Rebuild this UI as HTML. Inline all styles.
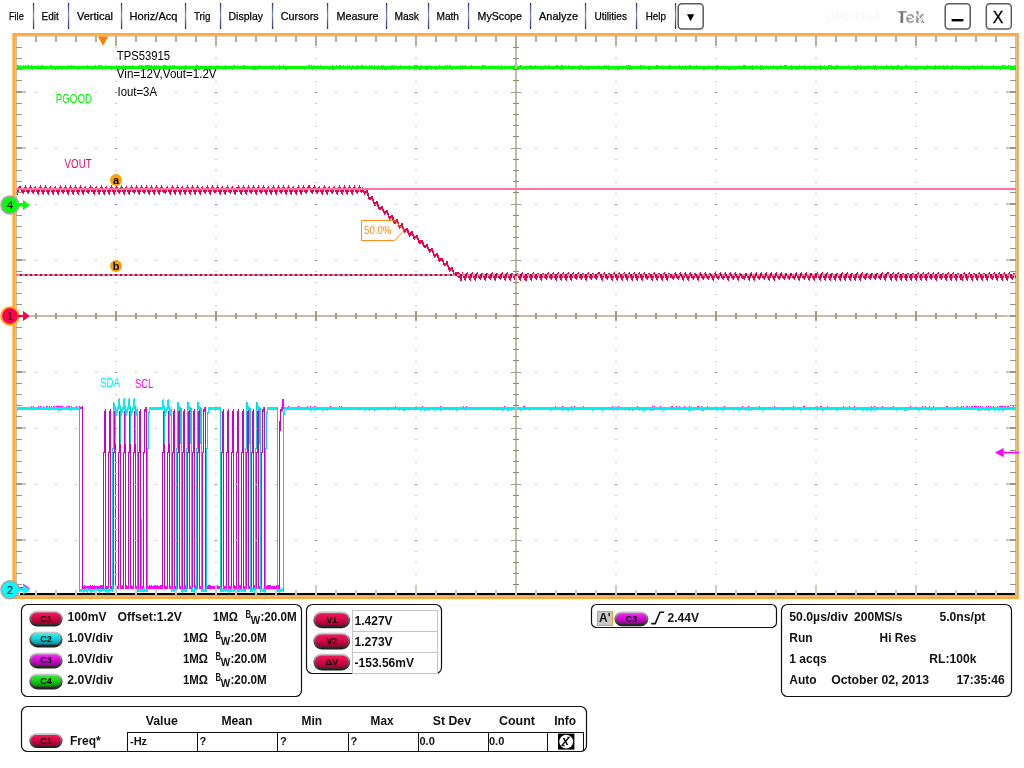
<!DOCTYPE html>
<html lang="en"><head><meta charset="utf-8"><title>Tek DPO7104 - TPS53915</title>
<style>
html,body{margin:0;padding:0;background:#fff;}
body{width:1024px;height:768px;overflow:hidden;position:relative;font-family:"Liberation Sans",Arial,sans-serif;}
svg{position:absolute;left:0;top:0;display:block;will-change:transform;}
text{font-family:"Liberation Sans",Arial,sans-serif;}
.ce{shape-rendering:crispEdges;}
</style></head><body>
<svg id="scope" width="1024" height="768" viewBox="0 0 1024 768">
<defs>
<linearGradient id="gC1" x1="0" y1="0" x2="0" y2="1"><stop offset="0" stop-color="#f0185a"/><stop offset="0.5" stop-color="#d80848"/><stop offset="1" stop-color="#98002c"/></linearGradient>
<linearGradient id="gC2" x1="0" y1="0" x2="0" y2="1"><stop offset="0" stop-color="#30f0f0"/><stop offset="0.5" stop-color="#10d0d8"/><stop offset="1" stop-color="#108890"/></linearGradient>
<linearGradient id="gC3" x1="0" y1="0" x2="0" y2="1"><stop offset="0" stop-color="#f030f0"/><stop offset="0.5" stop-color="#d808d8"/><stop offset="1" stop-color="#900890"/></linearGradient>
<linearGradient id="gC4" x1="0" y1="0" x2="0" y2="1"><stop offset="0" stop-color="#30f030"/><stop offset="0.5" stop-color="#10d010"/><stop offset="1" stop-color="#088808"/></linearGradient>
<linearGradient id="gRim" x1="0" y1="0" x2="0" y2="1"><stop offset="0" stop-color="#d8d8d8"/><stop offset="0.45" stop-color="#707070"/><stop offset="1" stop-color="#181818"/></linearGradient>
<linearGradient id="gSep" x1="0" y1="0" x2="0" y2="1"><stop offset="0" stop-color="#2a3680"/><stop offset="0.45" stop-color="#7f90c4"/><stop offset="1" stop-color="#222e78"/></linearGradient>
</defs>

<g id="menubar">
<text x="9" y="20" font-size="11" fill="#000" textLength="14.75" lengthAdjust="spacingAndGlyphs" stroke="#000" stroke-width="0.25">File</text>
<text x="41.5" y="20" font-size="11" fill="#000" textLength="17.25" lengthAdjust="spacingAndGlyphs" stroke="#000" stroke-width="0.25">Edit</text>
<text x="77" y="20" font-size="11" fill="#000" textLength="36" lengthAdjust="spacingAndGlyphs" stroke="#000" stroke-width="0.25">Vertical</text>
<text x="129.5" y="20" font-size="11" fill="#000" textLength="48.0" lengthAdjust="spacingAndGlyphs" stroke="#000" stroke-width="0.25">Horiz/Acq</text>
<text x="194" y="20" font-size="11" fill="#000" textLength="16.5" lengthAdjust="spacingAndGlyphs" stroke="#000" stroke-width="0.25">Trig</text>
<text x="228.5" y="20" font-size="11" fill="#000" textLength="34.5" lengthAdjust="spacingAndGlyphs" stroke="#000" stroke-width="0.25">Display</text>
<text x="280.75" y="20" font-size="11" fill="#000" textLength="38.0" lengthAdjust="spacingAndGlyphs" stroke="#000" stroke-width="0.25">Cursors</text>
<text x="336.5" y="20" font-size="11" fill="#000" textLength="42.0" lengthAdjust="spacingAndGlyphs" stroke="#000" stroke-width="0.25">Measure</text>
<text x="394.5" y="20" font-size="11" fill="#000" textLength="24.5" lengthAdjust="spacingAndGlyphs" stroke="#000" stroke-width="0.25">Mask</text>
<text x="436.5" y="20" font-size="11" fill="#000" textLength="22.5" lengthAdjust="spacingAndGlyphs" stroke="#000" stroke-width="0.25">Math</text>
<text x="477.5" y="20" font-size="11" fill="#000" textLength="44.5" lengthAdjust="spacingAndGlyphs" stroke="#000" stroke-width="0.25">MyScope</text>
<text x="539" y="20" font-size="11" fill="#000" textLength="39" lengthAdjust="spacingAndGlyphs" stroke="#000" stroke-width="0.25">Analyze</text>
<text x="594.5" y="20" font-size="11" fill="#000" textLength="32.5" lengthAdjust="spacingAndGlyphs" stroke="#000" stroke-width="0.25">Utilities</text>
<text x="645.75" y="20" font-size="11" fill="#000" textLength="20.25" lengthAdjust="spacingAndGlyphs" stroke="#000" stroke-width="0.25">Help</text>
<rect x="32.9" y="3" width="1.3" height="26" fill="url(#gSep)"/>
<rect x="67.9" y="3" width="1.3" height="26" fill="url(#gSep)"/>
<rect x="120.9" y="3" width="1.3" height="26" fill="url(#gSep)"/>
<rect x="184.9" y="3" width="1.3" height="26" fill="url(#gSep)"/>
<rect x="219.9" y="3" width="1.3" height="26" fill="url(#gSep)"/>
<rect x="271.9" y="3" width="1.3" height="26" fill="url(#gSep)"/>
<rect x="326.9" y="3" width="1.3" height="26" fill="url(#gSep)"/>
<rect x="385.9" y="3" width="1.3" height="26" fill="url(#gSep)"/>
<rect x="427.9" y="3" width="1.3" height="26" fill="url(#gSep)"/>
<rect x="467.9" y="3" width="1.3" height="26" fill="url(#gSep)"/>
<rect x="529.9" y="3" width="1.3" height="26" fill="url(#gSep)"/>
<rect x="584.9" y="3" width="1.3" height="26" fill="url(#gSep)"/>
<rect x="635.9" y="3" width="1.3" height="26" fill="url(#gSep)"/>
<rect x="674.9" y="3" width="1.3" height="26" fill="url(#gSep)"/>
<rect x="678.2" y="3.7" width="25" height="25.4" rx="3.5" fill="#fff" stroke="#5a5a5a" stroke-width="1.5"/>
<path d="M687 14.2h7.2l-3.6 7z" fill="#000"/>
<text x="826" y="21" font-size="13" fill="#f6f6f6" textLength="54" lengthAdjust="spacingAndGlyphs">DPO7104</text>
<text x="896.5" y="22.5" font-size="16" fill="#989898" font-weight="bold" textLength="28" lengthAdjust="spacingAndGlyphs">Tek</text>
<path d="M897 11.6L905 20M905 15.2L916 19.6M914 12L922 21" stroke="#fff" stroke-width="1.3" fill="none" opacity="0.9"/>
<rect x="900.8" y="11.4" width="2.4" height="11.2" fill="#777"/>
<rect x="945.2" y="3.7" width="25" height="25.4" rx="3.5" fill="#fff" stroke="#5a5a5a" stroke-width="1.5"/>
<rect x="951.6" y="19" width="11.8" height="2.4" fill="#000"/>
<rect x="986.3" y="3.7" width="25" height="25.4" rx="3.5" fill="#fff" stroke="#5a5a5a" stroke-width="1.5"/>
<text x="998" y="23.2" font-size="15.6" fill="#000" textLength="10.6" lengthAdjust="spacingAndGlyphs" text-anchor="middle" stroke="#000" stroke-width="0.3">X</text>
</g>
<g id="graticule">
<rect x="12" y="33" width="1007" height="566" fill="#fff"/>
<path d="M12.1 33H1018.9V598.9H12.1ZM15.6 35.7V596.3H1016.6V35.7Z" fill="#ffaa33" fill-rule="evenodd"/>
<path d="M15.6 35.7H1016.6V596.3H15.6ZM16.8 36.6V595H1015.2V36.6Z" fill="#bfb094" fill-rule="evenodd"/>
<rect x="12.1" y="33" width="1" height="566" fill="#ffd08a" opacity="0.7"/>
</g>
<g id="ch4"><path class="ce" d="M17.5 65v5M18.5 65v4M19.5 66v3M20.5 65v4M21.5 66v3M22.5 66v3M23.5 65v4M24.5 66v3M25.5 65v4M26.5 66v3M27.5 65v4M28.5 65v4M29.5 66v3M30.5 66v3M31.5 65v4M32.5 66v4M33.5 66v3M34.5 66v3M35.5 66v3M36.5 66v3M37.5 66v3M38.5 65v4M39.5 66v3M40.5 66v4M41.5 65v4M42.5 65v4M43.5 66v4M44.5 66v3M45.5 66v4M46.5 66v3M47.5 66v3M48.5 66v3M49.5 66v3M50.5 65v4M51.5 65v4M52.5 66v4M53.5 66v3M54.5 66v3M55.5 66v4M56.5 66v3M57.5 66v3M58.5 66v4M59.5 66v3M60.5 66v3M61.5 66v4M62.5 66v3M63.5 66v3M64.5 66v3M65.5 66v3M66.5 66v4M67.5 66v3M68.5 65v4M69.5 66v3M70.5 66v3M71.5 65v4M72.5 66v3M73.5 65v4M74.5 66v3M75.5 66v3M76.5 66v3M77.5 66v3M78.5 66v4M79.5 66v3M80.5 66v3M81.5 66v3M82.5 66v3M83.5 66v3M84.5 66v3M85.5 66v3M86.5 66v3M87.5 65v4M88.5 66v3M89.5 66v3M90.5 66v3M91.5 66v3M92.5 66v4M93.5 66v3M94.5 66v3M95.5 65v4M96.5 66v3M97.5 66v4M98.5 65v4M99.5 65v4M100.5 66v3M101.5 65v4M102.5 66v4M103.5 66v3M104.5 66v3M105.5 65v4M106.5 66v3M107.5 66v3M108.5 66v3M109.5 66v3M110.5 66v3M111.5 66v4M112.5 66v3M113.5 66v3M114.5 66v3M115.5 66v3M116.5 65v4M117.5 66v4M118.5 66v4M119.5 66v4M120.5 66v3M121.5 66v3M122.5 66v4M123.5 65v4M124.5 66v3M125.5 66v3M126.5 66v3M127.5 66v3M128.5 66v3M129.5 66v3M130.5 66v3M131.5 66v3M132.5 65v4M133.5 66v3M134.5 66v3M135.5 66v3M136.5 66v3M137.5 66v3M138.5 66v3M139.5 65v4M140.5 66v3M141.5 65v4M142.5 65v4M143.5 66v4M144.5 66v4M145.5 65v5M146.5 65v4M147.5 65v4M148.5 65v4M149.5 65v4M150.5 66v3M151.5 65v4M152.5 66v3M153.5 66v3M154.5 65v4M155.5 66v4M156.5 65v5M157.5 66v3M158.5 65v4M159.5 66v3M160.5 66v3M161.5 66v3M162.5 66v3M163.5 65v4M164.5 65v4M165.5 65v5M166.5 66v4M167.5 66v3M168.5 66v4M169.5 65v4M170.5 66v3M171.5 66v3M172.5 65v4M173.5 66v3M174.5 65v4M175.5 66v3M176.5 66v3M177.5 66v3M178.5 66v3M179.5 66v4M180.5 66v3M181.5 66v4M182.5 66v3M183.5 66v3M184.5 66v3M185.5 65v5M186.5 66v4M187.5 66v3M188.5 66v3M189.5 66v3M190.5 66v3M191.5 66v3M192.5 66v3M193.5 66v4M194.5 66v3M195.5 66v3M196.5 65v4M197.5 65v4M198.5 66v4M199.5 66v4M200.5 66v3M201.5 66v3M202.5 66v3M203.5 66v3M204.5 66v3M205.5 66v3M206.5 66v3M207.5 66v4M208.5 66v4M209.5 66v4M210.5 66v4M211.5 66v3M212.5 66v3M213.5 66v3M214.5 66v3M215.5 66v3M216.5 66v3M217.5 65v4M218.5 66v3M219.5 66v3M220.5 66v3M221.5 66v3M222.5 66v3M223.5 66v4M224.5 66v3M225.5 65v5M226.5 66v3M227.5 66v3M228.5 66v3M229.5 66v3M230.5 66v3M231.5 66v3M232.5 66v4M233.5 65v4M234.5 65v4M235.5 66v3M236.5 66v3M237.5 65v4M238.5 66v3M239.5 66v3M240.5 66v3M241.5 66v3M242.5 66v3M243.5 65v4M244.5 65v4M245.5 66v3M246.5 66v3M247.5 66v3M248.5 66v3M249.5 66v3M250.5 66v3M251.5 66v3M252.5 66v4M253.5 66v4M254.5 66v4M255.5 66v4M256.5 66v3M257.5 66v4M258.5 66v3M259.5 65v4M260.5 66v3M261.5 66v3M262.5 66v3M263.5 66v3M264.5 66v3M265.5 66v3M266.5 66v3M267.5 66v3M268.5 66v3M269.5 66v3M270.5 65v4M271.5 66v3M272.5 66v4M273.5 65v4M274.5 66v3M275.5 66v4M276.5 66v3M277.5 66v3M278.5 66v3M279.5 65v5M280.5 66v3M281.5 66v3M282.5 66v3M283.5 65v4M284.5 66v3M285.5 66v4M286.5 66v4M287.5 66v3M288.5 66v3M289.5 66v3M290.5 66v3M291.5 66v3M292.5 66v3M293.5 66v3M294.5 66v3M295.5 66v3M296.5 66v3M297.5 66v3M298.5 66v3M299.5 66v3M300.5 66v3M301.5 66v3M302.5 66v3M303.5 66v3M304.5 66v4M305.5 66v3M306.5 66v3M307.5 66v3M308.5 65v4M309.5 65v4M310.5 66v3M311.5 65v4M312.5 66v4M313.5 65v4M314.5 66v3M315.5 66v3M316.5 66v3M317.5 65v4M318.5 66v3M319.5 66v3M320.5 65v4M321.5 66v3M322.5 66v3M323.5 66v4M324.5 66v3M325.5 66v3M326.5 66v3M327.5 66v3M328.5 66v3M329.5 66v4M330.5 66v3M331.5 66v3M332.5 65v5M333.5 66v4M334.5 66v4M335.5 66v3M336.5 65v4M337.5 66v3M338.5 66v3M339.5 65v4M340.5 65v5M341.5 66v3M342.5 66v3M343.5 65v4M344.5 66v3M345.5 66v3M346.5 66v3M347.5 65v4M348.5 66v4M349.5 65v4M350.5 66v3M351.5 66v4M352.5 65v4M353.5 66v3M354.5 66v3M355.5 66v3M356.5 66v4M357.5 65v4M358.5 66v3M359.5 66v3M360.5 66v3M361.5 65v4M362.5 65v4M363.5 66v3M364.5 66v3M365.5 65v4M366.5 66v3M367.5 66v3M368.5 66v3M369.5 65v4M370.5 66v3M371.5 65v4M372.5 66v3M373.5 66v3M374.5 65v5M375.5 66v3M376.5 66v3M377.5 66v4M378.5 65v4M379.5 66v3M380.5 66v4M381.5 65v4M382.5 66v4M383.5 65v4M384.5 66v4M385.5 66v4M386.5 66v4M387.5 66v3M388.5 66v4M389.5 66v3M390.5 66v4M391.5 65v5M392.5 65v4M393.5 66v4M394.5 65v4M395.5 66v3M396.5 66v3M397.5 66v4M398.5 66v3M399.5 66v3M400.5 65v4M401.5 66v3M402.5 66v3M403.5 66v3M404.5 66v3M405.5 66v3M406.5 66v3M407.5 66v3M408.5 66v3M409.5 65v5M410.5 66v3M411.5 66v3M412.5 66v3M413.5 66v3M414.5 65v5M415.5 65v4M416.5 65v4M417.5 65v4M418.5 66v3M419.5 66v4M420.5 66v4M421.5 65v4M422.5 66v3M423.5 66v3M424.5 66v3M425.5 66v4M426.5 66v4M427.5 66v4M428.5 66v3M429.5 65v4M430.5 66v3M431.5 66v4M432.5 66v3M433.5 66v3M434.5 66v3M435.5 66v4M436.5 66v3M437.5 66v4M438.5 66v3M439.5 65v4M440.5 66v3M441.5 66v3M442.5 66v3M443.5 66v4M444.5 66v3M445.5 65v4M446.5 66v4M447.5 65v4M448.5 66v3M449.5 65v4M450.5 65v4M451.5 66v4M452.5 66v4M453.5 66v3M454.5 66v3M455.5 66v3M456.5 66v3M457.5 66v3M458.5 66v3M459.5 66v3M460.5 65v5M461.5 66v3M462.5 65v4M463.5 66v3M464.5 66v3M465.5 65v4M466.5 66v3M467.5 66v3M468.5 66v3M469.5 66v3M470.5 66v3M471.5 65v4M472.5 66v3M473.5 66v3M474.5 66v3M475.5 66v3M476.5 66v3M477.5 66v3M478.5 66v3M479.5 66v3M480.5 66v3M481.5 66v4M482.5 65v4M483.5 65v4M484.5 66v3M485.5 65v4M486.5 66v3M487.5 66v3M488.5 66v3M489.5 66v3M490.5 66v3M491.5 66v3M492.5 65v4M493.5 66v3M494.5 66v3M495.5 66v3M496.5 66v3M497.5 66v3M498.5 65v4M499.5 66v3M500.5 66v4M501.5 65v4M502.5 66v4M503.5 66v3M504.5 66v4M505.5 66v3M506.5 66v3M507.5 66v3M508.5 66v3M509.5 66v3M510.5 66v3M511.5 66v3M512.5 66v3M513.5 66v3M514.5 65v4M515.5 65v4M516.5 66v4M517.5 66v3M518.5 66v4M519.5 66v3M520.5 65v4M521.5 65v4M522.5 66v4M523.5 66v3M524.5 66v3M525.5 66v3M526.5 66v4M527.5 66v3M528.5 66v3M529.5 66v3M530.5 65v4M531.5 66v3M532.5 66v4M533.5 66v3M534.5 66v3M535.5 65v4M536.5 66v3M537.5 66v3M538.5 66v3M539.5 66v3M540.5 66v4M541.5 66v4M542.5 66v3M543.5 66v4M544.5 66v3M545.5 65v4M546.5 66v3M547.5 66v3M548.5 65v4M549.5 66v3M550.5 66v3M551.5 66v3M552.5 66v3M553.5 66v4M554.5 66v3M555.5 66v3M556.5 65v4M557.5 65v4M558.5 66v3M559.5 66v3M560.5 66v4M561.5 65v4M562.5 65v5M563.5 66v4M564.5 66v3M565.5 65v4M566.5 66v3M567.5 66v3M568.5 65v4M569.5 66v3M570.5 66v3M571.5 66v3M572.5 66v4M573.5 66v3M574.5 66v3M575.5 66v3M576.5 66v3M577.5 66v3M578.5 66v3M579.5 66v4M580.5 65v4M581.5 65v4M582.5 66v3M583.5 66v4M584.5 66v3M585.5 66v4M586.5 66v4M587.5 66v3M588.5 66v4M589.5 66v3M590.5 66v3M591.5 66v3M592.5 66v3M593.5 66v3M594.5 66v3M595.5 66v3M596.5 66v3M597.5 66v3M598.5 65v4M599.5 66v3M600.5 66v3M601.5 66v3M602.5 66v3M603.5 66v4M604.5 65v4M605.5 66v3M606.5 65v4M607.5 66v3M608.5 65v5M609.5 66v4M610.5 66v3M611.5 66v3M612.5 66v4M613.5 66v3M614.5 66v4M615.5 66v3M616.5 66v3M617.5 66v4M618.5 66v4M619.5 66v4M620.5 66v3M621.5 66v3M622.5 66v4M623.5 66v3M624.5 66v3M625.5 66v3M626.5 65v4M627.5 66v4M628.5 65v4M629.5 65v5M630.5 65v4M631.5 66v4M632.5 66v4M633.5 66v3M634.5 66v3M635.5 66v3M636.5 66v3M637.5 66v3M638.5 66v3M639.5 66v3M640.5 65v5M641.5 65v4M642.5 66v4M643.5 66v3M644.5 65v4M645.5 66v3M646.5 66v3M647.5 66v3M648.5 66v4M649.5 66v4M650.5 66v4M651.5 66v3M652.5 66v3M653.5 66v3M654.5 66v3M655.5 66v3M656.5 65v4M657.5 65v4M658.5 66v3M659.5 66v3M660.5 66v3M661.5 66v3M662.5 65v4M663.5 66v3M664.5 66v3M665.5 66v3M666.5 66v3M667.5 66v3M668.5 66v4M669.5 65v4M670.5 65v4M671.5 66v3M672.5 66v3M673.5 66v3M674.5 66v3M675.5 66v3M676.5 66v3M677.5 66v3M678.5 66v3M679.5 65v4M680.5 66v3M681.5 66v4M682.5 66v3M683.5 66v3M684.5 66v4M685.5 65v4M686.5 66v4M687.5 66v3M688.5 66v3M689.5 65v4M690.5 65v4M691.5 66v3M692.5 66v3M693.5 66v3M694.5 66v4M695.5 66v3M696.5 65v4M697.5 66v4M698.5 66v3M699.5 66v3M700.5 66v3M701.5 66v3M702.5 66v3M703.5 66v4M704.5 66v4M705.5 66v3M706.5 66v3M707.5 66v4M708.5 65v4M709.5 66v3M710.5 66v3M711.5 66v3M712.5 66v4M713.5 66v3M714.5 66v3M715.5 66v4M716.5 65v4M717.5 65v5M718.5 66v3M719.5 66v3M720.5 66v4M721.5 66v3M722.5 66v3M723.5 66v3M724.5 66v4M725.5 66v3M726.5 66v4M727.5 66v3M728.5 66v4M729.5 66v4M730.5 66v3M731.5 66v4M732.5 66v3M733.5 66v3M734.5 66v4M735.5 66v4M736.5 66v3M737.5 66v3M738.5 66v3M739.5 65v4M740.5 66v3M741.5 66v4M742.5 66v3M743.5 65v4M744.5 65v4M745.5 65v4M746.5 66v3M747.5 66v3M748.5 66v3M749.5 66v3M750.5 66v3M751.5 66v3M752.5 65v5M753.5 66v4M754.5 66v3M755.5 66v3M756.5 65v4M757.5 66v3M758.5 66v3M759.5 66v3M760.5 65v5M761.5 66v4M762.5 65v4M763.5 66v4M764.5 66v3M765.5 66v3M766.5 65v4M767.5 66v3M768.5 66v4M769.5 66v3M770.5 66v3M771.5 66v3M772.5 66v3M773.5 65v4M774.5 66v3M775.5 66v3M776.5 66v3M777.5 66v4M778.5 66v3M779.5 66v3M780.5 65v4M781.5 66v3M782.5 66v3M783.5 66v3M784.5 65v4M785.5 65v4M786.5 65v4M787.5 66v3M788.5 66v4M789.5 66v3M790.5 66v3M791.5 65v5M792.5 66v4M793.5 66v3M794.5 66v3M795.5 66v4M796.5 66v3M797.5 66v4M798.5 66v4M799.5 65v4M800.5 66v3M801.5 66v3M802.5 66v3M803.5 66v3M804.5 65v4M805.5 66v4M806.5 66v3M807.5 66v3M808.5 66v3M809.5 66v3M810.5 66v4M811.5 66v3M812.5 66v3M813.5 66v3M814.5 66v4M815.5 66v3M816.5 66v3M817.5 66v3M818.5 66v3M819.5 66v3M820.5 65v5M821.5 66v4M822.5 66v3M823.5 66v3M824.5 65v4M825.5 66v4M826.5 66v3M827.5 66v4M828.5 65v4M829.5 65v4M830.5 66v3M831.5 65v5M832.5 66v3M833.5 66v3M834.5 66v3M835.5 66v4M836.5 65v4M837.5 65v4M838.5 66v3M839.5 66v3M840.5 66v3M841.5 66v4M842.5 66v3M843.5 66v3M844.5 66v3M845.5 66v3M846.5 66v3M847.5 66v3M848.5 65v4M849.5 66v3M850.5 66v4M851.5 66v3M852.5 66v3M853.5 66v3M854.5 66v4M855.5 66v4M856.5 66v4M857.5 65v4M858.5 66v3M859.5 66v3M860.5 65v5M861.5 66v3M862.5 66v3M863.5 66v3M864.5 66v4M865.5 66v3M866.5 66v3M867.5 66v3M868.5 65v4M869.5 66v3M870.5 66v3M871.5 66v3M872.5 66v3M873.5 65v4M874.5 66v4M875.5 65v4M876.5 66v4M877.5 66v3M878.5 66v3M879.5 66v3M880.5 66v3M881.5 66v3M882.5 66v3M883.5 66v4M884.5 66v3M885.5 66v3M886.5 65v4M887.5 66v3M888.5 66v3M889.5 66v4M890.5 66v3M891.5 65v4M892.5 66v4M893.5 66v4M894.5 66v3M895.5 66v3M896.5 66v4M897.5 65v4M898.5 65v5M899.5 66v3M900.5 66v4M901.5 66v4M902.5 66v4M903.5 66v3M904.5 66v3M905.5 65v4M906.5 65v4M907.5 66v3M908.5 66v3M909.5 66v3M910.5 65v4M911.5 66v4M912.5 66v3M913.5 66v3M914.5 66v4M915.5 66v4M916.5 66v3M917.5 66v4M918.5 66v3M919.5 66v3M920.5 66v3M921.5 66v3M922.5 66v3M923.5 66v3M924.5 66v4M925.5 66v3M926.5 66v4M927.5 65v4M928.5 66v3M929.5 66v3M930.5 66v3M931.5 66v3M932.5 66v3M933.5 66v3M934.5 66v4M935.5 65v4M936.5 66v3M937.5 66v3M938.5 66v3M939.5 65v4M940.5 66v3M941.5 66v3M942.5 66v3M943.5 65v4M944.5 66v4M945.5 66v3M946.5 66v3M947.5 65v4M948.5 66v3M949.5 66v3M950.5 66v3M951.5 66v4M952.5 65v4M953.5 66v3M954.5 66v3M955.5 66v3M956.5 65v4M957.5 66v3M958.5 66v3M959.5 66v3M960.5 66v3M961.5 66v3M962.5 66v4M963.5 66v3M964.5 66v4M965.5 66v3M966.5 66v3M967.5 66v3M968.5 66v4M969.5 66v4M970.5 66v3M971.5 66v3M972.5 66v3M973.5 65v4M974.5 66v4M975.5 66v3M976.5 66v3M977.5 65v4M978.5 66v3M979.5 66v3M980.5 65v4M981.5 66v3M982.5 65v4M983.5 66v3M984.5 66v3M985.5 66v3M986.5 66v4M987.5 66v3M988.5 66v3M989.5 66v3M990.5 66v3M991.5 66v3M992.5 66v3M993.5 65v4M994.5 66v3M995.5 66v3M996.5 66v4M997.5 66v3M998.5 66v3M999.5 66v3M1000.5 66v4M1001.5 66v3M1002.5 65v4M1003.5 65v4M1004.5 66v3M1005.5 65v4M1006.5 66v3M1007.5 66v3M1008.5 65v4M1009.5 66v3M1010.5 65v4M1011.5 66v3M1012.5 66v3M1013.5 66v3M1014.5 65v4M1015.5 66v3" stroke="#00ff00" stroke-width="1" fill="none"/></g>
<g id="ch3"><path class="ce" d="M82.5 406v183M103.5 452v134M105.5 453v133M104.5 411v42M105.5 409v44M108.5 452v134M110.5 453v133M109.5 411v42M110.5 409v44M113.5 452v134M115.5 453v133M114.5 411v42M115.5 409v44M118.5 452v134M120.5 453v133M119.5 411v42M120.5 409v44M123.5 452v134M125.5 453v133M124.5 411v42M125.5 409v44M128.5 452v134M130.5 453v133M129.5 411v42M130.5 409v44M133.5 452v134M135.5 453v133M134.5 411v42M135.5 409v44M138.5 452v134M140.5 453v133M139.5 411v42M140.5 409v44M143.5 452v134M146.5 452v134M144.5 409v44M146.5 407v46M162.5 452v134M164.5 453v133M163.5 411v42M164.5 409v44M167.5 452v134M169.5 453v133M168.5 411v42M169.5 409v44M172.5 452v134M174.5 453v133M173.5 411v42M174.5 409v44M177.5 452v134M179.5 453v133M178.5 411v42M179.5 409v44M182.5 452v134M184.5 453v133M183.5 411v42M184.5 409v44M187.5 452v134M189.5 453v133M188.5 411v42M189.5 409v44M192.5 452v134M194.5 453v133M193.5 411v42M194.5 409v44M197.5 452v134M199.5 453v133M198.5 411v42M199.5 409v44M202.5 452v134M205.5 452v134M203.5 409v44M205.5 407v46M221.5 452v134M223.5 453v133M222.5 411v42M223.5 409v44M226.5 452v134M228.5 453v133M227.5 411v42M228.5 409v44M231.5 452v134M233.5 453v133M232.5 411v42M233.5 409v44M236.5 452v134M238.5 453v133M237.5 411v42M238.5 409v44M241.5 452v134M243.5 453v133M242.5 411v42M243.5 409v44M246.5 452v134M248.5 453v133M247.5 411v42M248.5 409v44M251.5 452v134M253.5 453v133M252.5 411v42M253.5 409v44M256.5 452v134M258.5 453v133M257.5 411v42M258.5 409v44M261.5 452v134M264.5 452v134M262.5 409v44M264.5 407v46M279.5 421v168M280.5 409v22" stroke="#cc00cc" stroke-width="1" fill="none"/><path class="ce" d="M17.5 407v2M18.5 407v2M19.5 407v2M20.5 407v2M21.5 407v2M22.5 407v2M23.5 407v2M24.5 407v2M25.5 407v2M26.5 407v2M27.5 407v2M28.5 407v2M29.5 407v2M30.5 407v2M31.5 406v3M32.5 407v2M33.5 406v3M34.5 407v2M35.5 407v2M36.5 407v2M37.5 407v2M38.5 406v3M39.5 407v2M40.5 406v3M41.5 407v2M42.5 407v2M43.5 406v3M44.5 407v2M45.5 407v2M46.5 406v3M47.5 406v3M48.5 407v2M49.5 406v3M50.5 407v2M51.5 406v3M52.5 407v2M53.5 406v3M54.5 406v3M55.5 407v2M56.5 406v3M57.5 406v3M58.5 406v3M59.5 406v3M60.5 406v3M61.5 406v3M62.5 406v3M63.5 407v2M64.5 407v2M65.5 407v2M66.5 406v3M67.5 407v2M68.5 406v3M69.5 406v3M70.5 407v2M71.5 406v3M72.5 407v2M73.5 407v2M74.5 407v2M75.5 407v2M76.5 406v3M77.5 407v2M78.5 407v2M79.5 406v3M80.5 407v2M81.5 407v2M83.5 586v3M84.5 585v4M85.5 586v3M86.5 586v3M87.5 586v3M88.5 586v3M89.5 586v3M90.5 585v4M91.5 586v3M92.5 585v4M93.5 586v3M94.5 585v4M95.5 586v3M96.5 586v3M97.5 586v3M98.5 586v3M99.5 586v3M100.5 585v4M101.5 585v4M102.5 585v4M103.5 586v3M105.5 586v3M106.5 586v3M107.5 586v3M108.5 585v4M110.5 585v4M111.5 586v3M112.5 585v4M113.5 585v4M115.5 586v3M116.5 585v4M117.5 586v3M118.5 585v4M120.5 586v3M121.5 586v3M122.5 585v4M123.5 586v3M125.5 586v3M126.5 585v4M127.5 586v3M128.5 585v4M130.5 585v4M131.5 585v4M132.5 586v3M133.5 586v3M135.5 586v3M136.5 586v3M137.5 585v4M138.5 585v4M140.5 586v3M141.5 586v3M142.5 586v3M143.5 586v3M146.5 586v3M147.5 586v3M148.5 586v3M149.5 585v4M150.5 586v3M151.5 585v4M152.5 586v3M153.5 586v3M154.5 585v4M155.5 585v4M156.5 586v3M157.5 585v4M158.5 586v3M159.5 586v3M160.5 585v4M161.5 585v4M162.5 586v3M164.5 586v3M165.5 586v3M166.5 586v3M167.5 585v4M169.5 586v3M170.5 586v3M171.5 585v4M172.5 586v3M174.5 586v3M175.5 586v3M176.5 585v4M177.5 586v3M179.5 586v3M180.5 586v3M181.5 586v3M182.5 586v3M184.5 585v4M185.5 585v4M186.5 585v4M187.5 585v4M189.5 586v3M190.5 586v3M191.5 586v3M192.5 586v3M194.5 586v3M195.5 585v4M196.5 586v3M197.5 586v3M199.5 586v3M200.5 586v3M201.5 585v4M202.5 586v3M205.5 586v3M206.5 585v4M207.5 586v3M208.5 585v4M209.5 585v4M210.5 585v4M211.5 586v3M212.5 586v3M213.5 586v3M214.5 586v3M215.5 586v3M216.5 586v3M217.5 585v4M218.5 586v3M219.5 586v3M220.5 586v3M221.5 586v3M223.5 586v3M224.5 586v3M225.5 586v3M226.5 586v3M228.5 586v3M229.5 586v3M230.5 586v3M231.5 586v3M233.5 586v3M234.5 585v4M235.5 586v3M236.5 585v4M238.5 586v3M239.5 585v4M240.5 585v4M241.5 585v4M243.5 586v3M244.5 586v3M245.5 585v4M246.5 585v4M248.5 585v4M249.5 586v3M250.5 586v3M251.5 586v3M253.5 586v3M254.5 585v4M255.5 586v3M256.5 586v3M258.5 586v3M259.5 586v3M260.5 586v3M261.5 585v4M264.5 586v3M265.5 586v3M266.5 586v3M267.5 585v4M268.5 585v4M269.5 585v4M270.5 585v4M271.5 586v3M272.5 586v3M273.5 586v3M274.5 586v3M275.5 586v3M276.5 585v4M277.5 585v4M278.5 585v4M145.5 407v5M204.5 407v5M263.5 407v5M281.5 407v5M282.5 399v12M283.5 399v10M284.5 407v2M285.5 407v2M286.5 407v2M287.5 407v2M288.5 406v3M289.5 407v2M290.5 407v2M291.5 407v2M292.5 407v2M293.5 407v2M294.5 407v2M295.5 407v2M296.5 407v2M297.5 407v2M298.5 406v3M299.5 407v2M300.5 407v2M301.5 407v2M302.5 407v2M303.5 407v2M304.5 407v2M305.5 407v2M306.5 407v2M307.5 406v3M308.5 407v2M309.5 407v2M310.5 406v3M311.5 407v2M312.5 407v2M313.5 407v2M314.5 406v3M315.5 407v2M316.5 407v2M317.5 407v2M318.5 407v2M319.5 407v2M320.5 407v2M321.5 407v2M322.5 407v2M323.5 407v2M324.5 407v2M325.5 407v2M326.5 407v2M327.5 407v2M328.5 407v2M329.5 407v2M330.5 406v3M331.5 407v2M332.5 407v2M333.5 407v2M334.5 407v2M335.5 407v2M336.5 407v2M337.5 407v2M338.5 407v2M339.5 406v3M340.5 407v2M341.5 406v3M342.5 407v2M343.5 407v2M344.5 407v2M345.5 407v2M346.5 407v2M347.5 407v2M348.5 407v2M349.5 407v2M350.5 407v2M351.5 407v2M352.5 407v2M353.5 407v2M354.5 407v2M355.5 407v2M356.5 407v2M357.5 407v2M358.5 407v2M359.5 407v2M360.5 407v2M361.5 407v2M362.5 407v2M363.5 407v2M364.5 407v2M365.5 407v2M366.5 407v2M367.5 407v2M368.5 407v2M369.5 407v2M370.5 407v2M371.5 407v2M372.5 407v2M373.5 407v2M374.5 407v2M375.5 407v2M376.5 407v2M377.5 407v2M378.5 407v2M379.5 407v2M380.5 407v2M381.5 407v2M382.5 407v2M383.5 407v2M384.5 407v2M385.5 407v2M386.5 407v2M387.5 407v2M388.5 407v2M389.5 407v2M390.5 407v2M391.5 407v2M392.5 407v2M393.5 407v2M394.5 407v2M395.5 406v3M396.5 407v2M397.5 407v2M398.5 407v2M399.5 407v2M400.5 407v2M401.5 407v2M402.5 407v2M403.5 407v2M404.5 407v2M405.5 407v2M406.5 407v2M407.5 407v2M408.5 407v2M409.5 407v2M410.5 407v2M411.5 407v2M412.5 407v2M413.5 407v2M414.5 407v2M415.5 407v2M416.5 407v2M417.5 407v2M418.5 407v2M419.5 407v2M420.5 407v2M421.5 407v2M422.5 406v3M423.5 407v2M424.5 407v2M425.5 407v2M426.5 407v2M427.5 407v2M428.5 407v2M429.5 407v2M430.5 407v2M431.5 407v2M432.5 407v2M433.5 407v2M434.5 407v2M435.5 407v2M436.5 407v2M437.5 407v2M438.5 407v2M439.5 407v2M440.5 406v3M441.5 407v2M442.5 407v2M443.5 407v2M444.5 407v2M445.5 407v2M446.5 407v2M447.5 407v2M448.5 407v2M449.5 407v2M450.5 407v2M451.5 407v2M452.5 407v2M453.5 407v2M454.5 407v2M455.5 407v2M456.5 407v2M457.5 407v2M458.5 407v2M459.5 407v2M460.5 407v2M461.5 407v2M462.5 407v2M463.5 406v3M464.5 407v2M465.5 407v2M466.5 406v3M467.5 407v2M468.5 407v2M469.5 407v2M470.5 407v2M471.5 407v2M472.5 407v2M473.5 407v2M474.5 407v2M475.5 407v2M476.5 407v2M477.5 407v2M478.5 407v2M479.5 407v2M480.5 407v2M481.5 407v2M482.5 407v2M483.5 407v2M484.5 407v2M485.5 407v2M486.5 407v2M487.5 407v2M488.5 407v2M489.5 407v2M490.5 407v2M491.5 407v2M492.5 407v2M493.5 407v2M494.5 407v2M495.5 407v2M496.5 407v2M497.5 407v2M498.5 407v2M499.5 407v2M500.5 407v2M501.5 407v2M502.5 407v2M503.5 407v2M504.5 406v3M505.5 407v2M506.5 407v2M507.5 407v2M508.5 407v2M509.5 407v2M510.5 407v2M511.5 407v2M512.5 407v2M513.5 407v2M514.5 407v2M515.5 407v2M516.5 406v3M517.5 407v2M518.5 407v2M519.5 407v2M520.5 407v2M521.5 407v2M522.5 407v2M523.5 406v3M524.5 406v3M525.5 407v2M526.5 407v2M527.5 407v2M528.5 407v2M529.5 407v2M530.5 407v2M531.5 407v2M532.5 407v2M533.5 407v2M534.5 407v2M535.5 407v2M536.5 407v2M537.5 407v2M538.5 407v2M539.5 407v2M540.5 407v2M541.5 407v2M542.5 407v2M543.5 407v2M544.5 407v2M545.5 407v2M546.5 407v2M547.5 407v2M548.5 407v2M549.5 407v2M550.5 407v2M551.5 407v2M552.5 407v2M553.5 407v2M554.5 407v2M555.5 406v3M556.5 407v2M557.5 407v2M558.5 407v2M559.5 407v2M560.5 407v2M561.5 407v2M562.5 406v3M563.5 407v2M564.5 407v2M565.5 407v2M566.5 407v2M567.5 407v2M568.5 407v2M569.5 407v2M570.5 407v2M571.5 406v3M572.5 407v2M573.5 407v2M574.5 406v3M575.5 407v2M576.5 407v2M577.5 407v2M578.5 407v2M579.5 407v2M580.5 407v2M581.5 407v2M582.5 407v2M583.5 406v3M584.5 407v2M585.5 407v2M586.5 407v2M587.5 407v2M588.5 407v2M589.5 407v2M590.5 407v2M591.5 407v2M592.5 407v2M593.5 407v2M594.5 407v2M595.5 407v2M596.5 407v2M597.5 407v2M598.5 407v2M599.5 407v2M600.5 407v2M601.5 407v2M602.5 407v2M603.5 407v2M604.5 407v2M605.5 407v2M606.5 407v2M607.5 407v2M608.5 407v2M609.5 407v2M610.5 407v2M611.5 407v2M612.5 406v3M613.5 407v2M614.5 407v2M615.5 407v2M616.5 406v3M617.5 407v2M618.5 406v3M619.5 407v2M620.5 407v2M621.5 407v2M622.5 407v2M623.5 407v2M624.5 407v2M625.5 407v2M626.5 407v2M627.5 407v2M628.5 407v2M629.5 407v2M630.5 407v2M631.5 407v2M632.5 407v2M633.5 407v2M634.5 407v2M635.5 407v2M636.5 407v2M637.5 406v3M638.5 407v2M639.5 407v2M640.5 407v2M641.5 407v2M642.5 407v2M643.5 407v2M644.5 407v2M645.5 407v2M646.5 407v2M647.5 407v2M648.5 407v2M649.5 407v2M650.5 407v2M651.5 407v2M652.5 406v3M653.5 407v2M654.5 406v3M655.5 407v2M656.5 407v2M657.5 407v2M658.5 407v2M659.5 407v2M660.5 406v3M661.5 407v2M662.5 407v2M663.5 407v2M664.5 407v2M665.5 407v2M666.5 407v2M667.5 407v2M668.5 407v2M669.5 407v2M670.5 407v2M671.5 406v3M672.5 406v3M673.5 407v2M674.5 407v2M675.5 407v2M676.5 406v3M677.5 407v2M678.5 407v2M679.5 406v3M680.5 407v2M681.5 407v2M682.5 407v2M683.5 407v2M684.5 406v3M685.5 407v2M686.5 407v2M687.5 407v2M688.5 407v2M689.5 406v3M690.5 407v2M691.5 407v2M692.5 407v2M693.5 407v2M694.5 407v2M695.5 407v2M696.5 407v2M697.5 406v3M698.5 406v3M699.5 407v2M700.5 407v2M701.5 406v3M702.5 407v2M703.5 407v2M704.5 407v2M705.5 407v2M706.5 407v2M707.5 406v3M708.5 407v2M709.5 407v2M710.5 407v2M711.5 407v2M712.5 407v2M713.5 407v2M714.5 407v2M715.5 407v2M716.5 407v2M717.5 407v2M718.5 407v2M719.5 407v2M720.5 407v2M721.5 407v2M722.5 407v2M723.5 407v2M724.5 406v3M725.5 407v2M726.5 407v2M727.5 407v2M728.5 407v2M729.5 407v2M730.5 407v2M731.5 407v2M732.5 407v2M733.5 407v2M734.5 407v2M735.5 407v2M736.5 407v2M737.5 407v2M738.5 407v2M739.5 407v2M740.5 407v2M741.5 407v2M742.5 406v3M743.5 407v2M744.5 407v2M745.5 407v2M746.5 407v2M747.5 407v2M748.5 406v3M749.5 407v2M750.5 407v2M751.5 407v2M752.5 407v2M753.5 407v2M754.5 407v2M755.5 407v2M756.5 407v2M757.5 407v2M758.5 407v2M759.5 406v3M760.5 407v2M761.5 407v2M762.5 407v2M763.5 407v2M764.5 407v2M765.5 407v2M766.5 407v2M767.5 407v2M768.5 407v2M769.5 407v2M770.5 407v2M771.5 407v2M772.5 407v2M773.5 407v2M774.5 406v3M775.5 407v2M776.5 407v2M777.5 407v2M778.5 407v2M779.5 407v2M780.5 407v2M781.5 407v2M782.5 407v2M783.5 407v2M784.5 407v2M785.5 407v2M786.5 407v2M787.5 407v2M788.5 407v2M789.5 407v2M790.5 407v2M791.5 407v2M792.5 407v2M793.5 406v3M794.5 407v2M795.5 407v2M796.5 407v2M797.5 407v2M798.5 407v2M799.5 407v2M800.5 407v2M801.5 407v2M802.5 407v2M803.5 406v3M804.5 406v3M805.5 407v2M806.5 407v2M807.5 407v2M808.5 407v2M809.5 407v2M810.5 407v2M811.5 407v2M812.5 407v2M813.5 407v2M814.5 407v2M815.5 407v2M816.5 407v2M817.5 406v3M818.5 407v2M819.5 407v2M820.5 406v3M821.5 406v3M822.5 407v2M823.5 407v2M824.5 407v2M825.5 407v2M826.5 407v2M827.5 406v3M828.5 407v2M829.5 407v2M830.5 407v2M831.5 407v2M832.5 407v2M833.5 407v2M834.5 407v2M835.5 407v2M836.5 407v2M837.5 407v2M838.5 407v2M839.5 407v2M840.5 407v2M841.5 407v2M842.5 407v2M843.5 406v3M844.5 407v2M845.5 407v2M846.5 407v2M847.5 407v2M848.5 407v2M849.5 406v3M850.5 407v2M851.5 407v2M852.5 407v2M853.5 407v2M854.5 406v3M855.5 407v2M856.5 407v2M857.5 407v2M858.5 407v2M859.5 407v2M860.5 407v2M861.5 407v2M862.5 407v2M863.5 407v2M864.5 407v2M865.5 407v2M866.5 407v2M867.5 407v2M868.5 407v2M869.5 407v2M870.5 407v2M871.5 406v3M872.5 407v2M873.5 407v2M874.5 406v3M875.5 407v2M876.5 407v2M877.5 407v2M878.5 407v2M879.5 407v2M880.5 407v2M881.5 407v2M882.5 406v3M883.5 407v2M884.5 407v2M885.5 407v2M886.5 407v2M887.5 407v2M888.5 407v2M889.5 407v2M890.5 407v2M891.5 407v2M892.5 407v2M893.5 406v3M894.5 407v2M895.5 407v2M896.5 407v2M897.5 407v2M898.5 407v2M899.5 407v2M900.5 407v2M901.5 407v2M902.5 407v2M903.5 407v2M904.5 407v2M905.5 407v2M906.5 407v2M907.5 407v2M908.5 407v2M909.5 407v2M910.5 406v3M911.5 407v2M912.5 407v2M913.5 407v2M914.5 407v2M915.5 407v2M916.5 407v2M917.5 407v2M918.5 407v2M919.5 407v2M920.5 407v2M921.5 407v2M922.5 406v3M923.5 407v2M924.5 407v2M925.5 406v3M926.5 407v2M927.5 407v2M928.5 407v2M929.5 406v3M930.5 407v2M931.5 407v2M932.5 407v2M933.5 406v3M934.5 407v2M935.5 407v2M936.5 407v2M937.5 407v2M938.5 407v2M939.5 407v2M940.5 407v2M941.5 407v2M942.5 407v2M943.5 407v2M944.5 407v2M945.5 407v2M946.5 406v3M947.5 406v3M948.5 407v2M949.5 407v2M950.5 407v2M951.5 407v2M952.5 407v2M953.5 407v2M954.5 407v2M955.5 407v2M956.5 407v2M957.5 406v3M958.5 407v2M959.5 407v2M960.5 407v2M961.5 406v3M962.5 407v2M963.5 406v3M964.5 407v2M965.5 407v2M966.5 406v3M967.5 406v3M968.5 407v2M969.5 406v3M970.5 407v2M971.5 406v3M972.5 406v3M973.5 407v2M974.5 406v3M975.5 406v3M976.5 406v3M977.5 407v2M978.5 406v3M979.5 407v2M980.5 406v3M981.5 407v2M982.5 406v3M983.5 407v2M984.5 407v2M985.5 407v2M986.5 406v3M987.5 407v2M988.5 406v3M989.5 407v2M990.5 406v3M991.5 407v2M992.5 407v2M993.5 406v3M994.5 407v2M995.5 407v2M996.5 407v2M997.5 406v3M998.5 407v2M999.5 406v3M1000.5 406v3M1001.5 406v3M1002.5 406v3M1003.5 407v2M1004.5 406v3M1005.5 406v3M1006.5 407v2M1007.5 406v3M1008.5 406v3M1009.5 407v2M1010.5 407v2M1011.5 407v2M1012.5 407v2M1013.5 406v3M1014.5 407v2M1015.5 407v2" stroke="#ff00ff" stroke-width="1" fill="none"/></g>
<g id="ch2"><path class="ce" d="M79.5 407v185M112.5 448v144M113.5 402v47M115.5 406v38M120.5 406v38M125.5 406v38M130.5 406v38M135.5 406v38M137.5 407v185M141.5 519v73M147.5 448v144M148.5 412v37M164.5 406v38M169.5 406v38M171.5 407v185M176.5 448v144M177.5 402v47M180.5 407v37M181.5 408v184M186.5 448v144M187.5 402v47M190.5 407v37M191.5 408v184M196.5 448v144M197.5 402v47M200.5 407v37M201.5 408v184M206.5 448v144M207.5 412v37M220.5 407v185M245.5 448v144M246.5 402v47M249.5 407v37M250.5 408v184M255.5 448v144M256.5 402v47M259.5 407v37M260.5 408v184M265.5 448v144M266.5 412v37M277.5 407v185M283.5 412v180" stroke="#00d8d8" stroke-width="1" fill="none"/><path class="ce" d="M17.5 407v4M18.5 407v3M19.5 407v3M20.5 407v3M21.5 407v3M22.5 407v3M23.5 407v3M24.5 407v3M25.5 407v3M26.5 407v3M27.5 407v3M28.5 407v3M29.5 407v3M30.5 407v3M31.5 407v3M32.5 407v3M33.5 407v3M34.5 407v3M35.5 407v3M36.5 407v3M37.5 407v3M38.5 407v3M39.5 407v3M40.5 407v3M41.5 407v3M42.5 407v3M43.5 407v3M44.5 407v3M45.5 407v3M46.5 407v3M47.5 407v3M48.5 407v3M49.5 407v4M50.5 407v3M51.5 407v3M52.5 407v3M53.5 407v3M54.5 407v3M55.5 407v3M56.5 407v3M57.5 407v3M58.5 407v4M59.5 407v3M60.5 407v3M61.5 407v4M62.5 407v3M63.5 407v3M64.5 407v3M65.5 407v3M66.5 407v3M67.5 407v3M68.5 407v3M69.5 407v3M70.5 407v4M71.5 407v3M72.5 407v3M73.5 407v3M74.5 407v3M75.5 407v3M76.5 407v3M77.5 407v3M78.5 407v3M80.5 589v3M81.5 589v3M82.5 589v2M83.5 589v4M84.5 589v3M85.5 589v2M86.5 588v4M87.5 588v5M88.5 589v2M89.5 588v3M90.5 589v4M91.5 589v3M92.5 589v3M93.5 589v2M94.5 589v3M95.5 589v3M96.5 588v3M97.5 589v2M98.5 589v2M99.5 589v4M100.5 588v4M101.5 589v3M102.5 589v2M103.5 589v2M104.5 588v3M105.5 589v3M106.5 589v4M107.5 589v3M108.5 588v5M109.5 589v3M110.5 589v2M111.5 589v2M114.5 403v7M116.5 409v7M117.5 407v6M118.5 399v11M119.5 398v11M121.5 409v7M122.5 407v6M123.5 399v11M124.5 398v11M126.5 409v7M127.5 407v6M128.5 399v11M129.5 398v11M131.5 409v7M132.5 407v6M133.5 399v11M134.5 398v11M136.5 409v7M137.5 407v6M138.5 589v3M139.5 589v3M140.5 589v3M141.5 589v3M142.5 589v3M143.5 588v4M144.5 588v4M145.5 589v3M146.5 589v3M149.5 407v7M150.5 407v3M151.5 407v3M152.5 407v3M153.5 407v3M154.5 407v3M155.5 407v3M156.5 407v3M157.5 407v3M158.5 407v3M159.5 407v3M160.5 407v3M161.5 407v3M162.5 400v10M163.5 399v10M165.5 409v7M166.5 407v6M167.5 400v10M168.5 399v10M170.5 409v7M171.5 407v6M172.5 589v2M173.5 589v3M174.5 589v3M175.5 589v2M178.5 402v8M179.5 406v4M182.5 589v4M183.5 588v4M184.5 589v3M185.5 589v3M188.5 402v8M189.5 406v4M192.5 588v4M193.5 589v3M194.5 588v5M195.5 589v3M198.5 402v8M199.5 406v4M202.5 589v3M203.5 589v3M204.5 589v3M205.5 589v3M208.5 407v7M209.5 407v3M210.5 407v3M211.5 407v3M212.5 407v3M213.5 407v3M214.5 407v3M215.5 407v4M216.5 407v3M217.5 407v3M218.5 407v3M219.5 407v3M221.5 589v3M222.5 589v3M223.5 589v3M224.5 589v2M225.5 588v4M226.5 589v2M227.5 589v3M228.5 589v4M229.5 589v3M230.5 589v3M231.5 588v4M232.5 589v2M233.5 588v4M234.5 589v2M235.5 589v3M236.5 589v3M237.5 589v4M238.5 589v3M239.5 588v4M240.5 589v2M241.5 589v3M242.5 589v2M243.5 589v3M244.5 589v3M247.5 402v8M248.5 406v4M251.5 589v3M252.5 588v4M253.5 589v2M254.5 588v5M257.5 402v8M258.5 406v4M261.5 589v2M262.5 589v3M263.5 588v4M264.5 589v4M267.5 407v7M268.5 407v3M269.5 407v3M270.5 407v3M271.5 407v3M272.5 407v3M273.5 407v4M274.5 407v3M275.5 407v3M276.5 407v3M278.5 589v3M279.5 589v4M280.5 589v3M281.5 589v3M282.5 588v3M284.5 407v8M285.5 407v3M286.5 407v3M287.5 407v3M288.5 407v3M289.5 407v3M290.5 407v3M291.5 407v3M292.5 407v3M293.5 407v3M294.5 407v3M295.5 407v3M296.5 407v3M297.5 407v3M298.5 407v3M299.5 407v3M300.5 407v3M301.5 407v3M302.5 407v3M303.5 407v3M304.5 407v3M305.5 407v3M306.5 407v3M307.5 407v3M308.5 407v3M309.5 407v3M310.5 407v4M311.5 407v3M312.5 407v3M313.5 407v3M314.5 407v4M315.5 407v3M316.5 407v3M317.5 407v3M318.5 407v3M319.5 407v3M320.5 407v3M321.5 407v3M322.5 407v4M323.5 407v3M324.5 407v3M325.5 407v3M326.5 407v3M327.5 407v4M328.5 407v3M329.5 407v3M330.5 407v3M331.5 407v3M332.5 407v3M333.5 407v3M334.5 407v3M335.5 407v3M336.5 407v3M337.5 407v3M338.5 407v3M339.5 407v3M340.5 407v3M341.5 407v3M342.5 407v3M343.5 407v3M344.5 407v3M345.5 407v3M346.5 407v3M347.5 407v3M348.5 407v3M349.5 407v3M350.5 407v3M351.5 407v3M352.5 407v3M353.5 407v3M354.5 407v3M355.5 407v3M356.5 407v3M357.5 407v3M358.5 407v3M359.5 407v3M360.5 407v3M361.5 407v3M362.5 407v3M363.5 407v3M364.5 407v4M365.5 407v3M366.5 407v3M367.5 407v3M368.5 407v3M369.5 407v4M370.5 407v3M371.5 407v3M372.5 407v3M373.5 407v3M374.5 407v4M375.5 407v3M376.5 407v3M377.5 407v3M378.5 407v3M379.5 407v3M380.5 407v3M381.5 407v3M382.5 407v3M383.5 407v3M384.5 407v3M385.5 407v3M386.5 407v3M387.5 407v4M388.5 407v3M389.5 407v3M390.5 407v3M391.5 407v3M392.5 407v3M393.5 407v3M394.5 407v3M395.5 407v3M396.5 407v3M397.5 407v3M398.5 407v3M399.5 407v4M400.5 407v3M401.5 407v3M402.5 407v3M403.5 407v4M404.5 407v4M405.5 407v3M406.5 407v3M407.5 407v3M408.5 407v3M409.5 407v4M410.5 407v3M411.5 407v3M412.5 407v3M413.5 407v3M414.5 407v3M415.5 407v3M416.5 407v3M417.5 407v3M418.5 407v3M419.5 407v3M420.5 407v4M421.5 407v3M422.5 407v3M423.5 407v3M424.5 407v4M425.5 407v3M426.5 407v3M427.5 407v4M428.5 407v3M429.5 407v4M430.5 407v3M431.5 407v3M432.5 407v3M433.5 407v3M434.5 407v4M435.5 407v3M436.5 407v3M437.5 407v3M438.5 407v3M439.5 407v3M440.5 407v4M441.5 407v3M442.5 407v3M443.5 407v3M444.5 407v3M445.5 407v3M446.5 407v3M447.5 407v3M448.5 407v3M449.5 407v4M450.5 407v3M451.5 407v3M452.5 407v3M453.5 407v3M454.5 407v3M455.5 407v3M456.5 407v4M457.5 407v3M458.5 407v3M459.5 407v3M460.5 407v3M461.5 407v3M462.5 407v3M463.5 407v3M464.5 407v3M465.5 407v4M466.5 407v3M467.5 407v3M468.5 407v3M469.5 407v3M470.5 407v3M471.5 407v3M472.5 407v3M473.5 407v3M474.5 407v3M475.5 407v3M476.5 407v3M477.5 407v3M478.5 407v3M479.5 407v3M480.5 407v3M481.5 407v3M482.5 407v3M483.5 407v3M484.5 407v3M485.5 407v3M486.5 407v3M487.5 407v3M488.5 407v3M489.5 407v3M490.5 407v3M491.5 407v3M492.5 407v3M493.5 407v4M494.5 407v3M495.5 407v3M496.5 407v3M497.5 407v4M498.5 407v3M499.5 407v3M500.5 407v3M501.5 407v3M502.5 407v4M503.5 407v3M504.5 407v3M505.5 407v3M506.5 407v3M507.5 407v4M508.5 407v4M509.5 407v3M510.5 407v3M511.5 407v4M512.5 407v3M513.5 407v3M514.5 407v3M515.5 407v4M516.5 407v3M517.5 407v3M518.5 407v3M519.5 407v3M520.5 407v4M521.5 407v3M522.5 407v3M523.5 407v3M524.5 407v3M525.5 407v3M526.5 407v3M527.5 407v3M528.5 407v3M529.5 407v4M530.5 407v3M531.5 407v3M532.5 407v3M533.5 407v3M534.5 407v3M535.5 407v3M536.5 407v3M537.5 407v3M538.5 407v3M539.5 407v3M540.5 407v3M541.5 407v3M542.5 407v3M543.5 407v3M544.5 407v3M545.5 407v3M546.5 407v3M547.5 407v3M548.5 407v3M549.5 407v3M550.5 407v4M551.5 407v3M552.5 407v3M553.5 407v3M554.5 407v3M555.5 407v3M556.5 407v3M557.5 407v3M558.5 407v3M559.5 407v3M560.5 407v3M561.5 407v3M562.5 407v4M563.5 407v3M564.5 407v3M565.5 407v3M566.5 407v3M567.5 407v4M568.5 407v4M569.5 407v3M570.5 407v3M571.5 407v3M572.5 407v4M573.5 407v3M574.5 407v3M575.5 407v3M576.5 407v3M577.5 407v3M578.5 407v3M579.5 407v3M580.5 407v3M581.5 407v3M582.5 407v3M583.5 407v3M584.5 407v3M585.5 407v3M586.5 407v3M587.5 407v3M588.5 407v3M589.5 407v3M590.5 407v3M591.5 407v3M592.5 407v4M593.5 407v3M594.5 407v3M595.5 407v3M596.5 407v3M597.5 407v3M598.5 407v3M599.5 407v3M600.5 407v3M601.5 407v3M602.5 407v4M603.5 407v3M604.5 407v3M605.5 407v3M606.5 407v3M607.5 407v3M608.5 407v3M609.5 407v3M610.5 407v3M611.5 407v3M612.5 407v3M613.5 407v4M614.5 407v3M615.5 407v3M616.5 407v3M617.5 407v4M618.5 407v3M619.5 407v3M620.5 407v3M621.5 407v3M622.5 407v3M623.5 407v3M624.5 407v3M625.5 407v4M626.5 407v3M627.5 407v3M628.5 407v3M629.5 407v4M630.5 407v3M631.5 407v3M632.5 407v4M633.5 407v3M634.5 407v3M635.5 407v3M636.5 407v3M637.5 407v3M638.5 407v3M639.5 407v4M640.5 407v3M641.5 407v3M642.5 407v4M643.5 407v3M644.5 407v4M645.5 407v3M646.5 407v3M647.5 407v3M648.5 407v3M649.5 407v3M650.5 407v4M651.5 407v3M652.5 407v3M653.5 407v4M654.5 407v3M655.5 407v3M656.5 407v3M657.5 407v3M658.5 407v3M659.5 407v3M660.5 407v3M661.5 407v3M662.5 407v4M663.5 407v3M664.5 407v3M665.5 407v4M666.5 407v3M667.5 407v3M668.5 407v3M669.5 407v3M670.5 407v3M671.5 407v3M672.5 407v3M673.5 407v3M674.5 407v3M675.5 407v3M676.5 407v3M677.5 407v3M678.5 407v3M679.5 407v3M680.5 407v3M681.5 407v3M682.5 407v3M683.5 407v3M684.5 407v3M685.5 407v3M686.5 407v3M687.5 407v3M688.5 407v4M689.5 407v3M690.5 407v4M691.5 407v3M692.5 407v3M693.5 407v4M694.5 407v3M695.5 407v3M696.5 407v3M697.5 407v3M698.5 407v3M699.5 407v3M700.5 407v3M701.5 407v4M702.5 407v4M703.5 407v4M704.5 407v3M705.5 407v3M706.5 407v3M707.5 407v3M708.5 407v3M709.5 407v3M710.5 407v3M711.5 407v3M712.5 407v3M713.5 407v3M714.5 407v3M715.5 407v3M716.5 407v4M717.5 407v3M718.5 407v3M719.5 407v3M720.5 407v3M721.5 407v3M722.5 407v4M723.5 407v3M724.5 407v3M725.5 407v3M726.5 407v3M727.5 407v3M728.5 407v3M729.5 407v3M730.5 407v3M731.5 407v3M732.5 407v3M733.5 407v4M734.5 407v3M735.5 407v3M736.5 407v3M737.5 407v3M738.5 407v4M739.5 407v3M740.5 407v3M741.5 407v3M742.5 407v3M743.5 407v3M744.5 407v3M745.5 407v4M746.5 407v3M747.5 407v3M748.5 407v4M749.5 407v3M750.5 407v3M751.5 407v4M752.5 407v3M753.5 407v3M754.5 407v3M755.5 407v3M756.5 407v3M757.5 407v3M758.5 407v3M759.5 407v3M760.5 407v3M761.5 407v3M762.5 407v4M763.5 407v3M764.5 407v3M765.5 407v3M766.5 407v3M767.5 407v3M768.5 407v3M769.5 407v3M770.5 407v3M771.5 407v3M772.5 407v3M773.5 407v3M774.5 407v3M775.5 407v3M776.5 407v3M777.5 407v3M778.5 407v3M779.5 407v3M780.5 407v3M781.5 407v3M782.5 407v3M783.5 407v4M784.5 407v3M785.5 407v3M786.5 407v3M787.5 407v3M788.5 407v3M789.5 407v3M790.5 407v3M791.5 407v3M792.5 407v3M793.5 407v4M794.5 407v3M795.5 407v3M796.5 407v3M797.5 407v3M798.5 407v3M799.5 407v3M800.5 407v4M801.5 407v3M802.5 407v3M803.5 407v3M804.5 407v3M805.5 407v3M806.5 407v3M807.5 407v3M808.5 407v3M809.5 407v4M810.5 407v3M811.5 407v3M812.5 407v3M813.5 407v3M814.5 407v3M815.5 407v3M816.5 407v3M817.5 407v4M818.5 407v3M819.5 407v3M820.5 407v3M821.5 407v3M822.5 407v4M823.5 407v3M824.5 407v3M825.5 407v3M826.5 407v3M827.5 407v3M828.5 407v3M829.5 407v3M830.5 407v3M831.5 407v3M832.5 407v3M833.5 407v3M834.5 407v3M835.5 407v3M836.5 407v4M837.5 407v3M838.5 407v3M839.5 407v3M840.5 407v3M841.5 407v3M842.5 407v3M843.5 407v3M844.5 407v3M845.5 407v3M846.5 407v3M847.5 407v3M848.5 407v3M849.5 407v3M850.5 407v3M851.5 407v3M852.5 407v3M853.5 407v4M854.5 407v3M855.5 407v4M856.5 407v3M857.5 407v3M858.5 407v3M859.5 407v3M860.5 407v3M861.5 407v3M862.5 407v4M863.5 407v3M864.5 407v3M865.5 407v3M866.5 407v4M867.5 407v3M868.5 407v3M869.5 407v3M870.5 407v4M871.5 407v3M872.5 407v3M873.5 407v3M874.5 407v4M875.5 407v3M876.5 407v3M877.5 407v3M878.5 407v3M879.5 407v3M880.5 407v3M881.5 407v3M882.5 407v3M883.5 407v3M884.5 407v3M885.5 407v3M886.5 407v3M887.5 407v3M888.5 407v3M889.5 407v3M890.5 407v3M891.5 407v3M892.5 407v3M893.5 407v3M894.5 407v3M895.5 407v3M896.5 407v4M897.5 407v3M898.5 407v3M899.5 407v3M900.5 407v3M901.5 407v3M902.5 407v3M903.5 407v3M904.5 407v4M905.5 407v4M906.5 407v3M907.5 407v4M908.5 407v3M909.5 407v3M910.5 407v3M911.5 407v3M912.5 407v3M913.5 407v3M914.5 407v3M915.5 407v3M916.5 407v3M917.5 407v3M918.5 407v4M919.5 407v3M920.5 407v3M921.5 407v3M922.5 407v3M923.5 407v3M924.5 407v3M925.5 407v3M926.5 407v3M927.5 407v3M928.5 407v3M929.5 407v4M930.5 407v3M931.5 407v4M932.5 407v3M933.5 407v3M934.5 407v3M935.5 407v4M936.5 407v3M937.5 407v3M938.5 407v3M939.5 407v3M940.5 407v3M941.5 407v3M942.5 407v3M943.5 407v3M944.5 407v3M945.5 407v3M946.5 407v3M947.5 407v3M948.5 407v3M949.5 407v3M950.5 407v3M951.5 407v3M952.5 407v3M953.5 407v3M954.5 407v3M955.5 407v3M956.5 407v3M957.5 407v3M958.5 407v3M959.5 407v3M960.5 407v3M961.5 407v3M962.5 407v3M963.5 407v3M964.5 407v3M965.5 407v3M966.5 407v3M967.5 407v3M968.5 407v3M969.5 407v3M970.5 407v3M971.5 407v3M972.5 407v3M973.5 407v3M974.5 407v3M975.5 407v3M976.5 407v3M977.5 407v3M978.5 407v4M979.5 407v4M980.5 407v3M981.5 407v4M982.5 407v3M983.5 407v3M984.5 407v3M985.5 407v4M986.5 407v3M987.5 407v3M988.5 407v4M989.5 407v3M990.5 407v3M991.5 407v3M992.5 407v3M993.5 407v3M994.5 407v4M995.5 407v3M996.5 407v3M997.5 407v3M998.5 407v4M999.5 407v3M1000.5 407v3M1001.5 407v3M1002.5 407v4M1003.5 407v4M1004.5 407v3M1005.5 407v3M1006.5 407v3M1007.5 407v3M1008.5 407v3M1009.5 407v3M1010.5 407v3M1011.5 407v3M1012.5 407v3M1013.5 407v3M1014.5 407v3M1015.5 407v3" stroke="#00f0f0" stroke-width="1" fill="none"/></g>
<g id="ch1"><path class="ce" d="M17.5 188v7M18.5 187v5M19.5 186v4M20.5 186v4M21.5 188v4M22.5 188v5M23.5 188v6M24.5 187v5M25.5 185v5M26.5 187v5M27.5 188v5M28.5 188v6M29.5 187v5M30.5 185v5M31.5 187v5M32.5 188v5M33.5 188v6M34.5 187v5M35.5 186v4M36.5 188v4M37.5 188v6M38.5 188v7M39.5 187v5M40.5 185v5M41.5 187v5M42.5 188v6M43.5 188v7M44.5 187v5M45.5 185v5M46.5 187v5M47.5 188v6M48.5 188v7M49.5 187v5M50.5 186v4M51.5 188v4M52.5 188v6M53.5 188v7M54.5 187v5M55.5 186v4M56.5 188v4M57.5 188v6M58.5 188v7M59.5 187v5M60.5 185v5M61.5 187v5M62.5 188v5M63.5 188v6M64.5 187v5M65.5 185v5M66.5 187v5M67.5 188v6M68.5 188v7M69.5 187v5M70.5 185v5M71.5 187v5M72.5 188v6M73.5 188v7M74.5 187v5M75.5 185v5M76.5 187v5M77.5 188v6M78.5 188v7M79.5 187v5M80.5 185v5M81.5 187v5M82.5 188v6M83.5 188v7M84.5 187v5M85.5 186v4M86.5 188v4M87.5 188v5M88.5 188v6M89.5 187v5M90.5 185v5M91.5 187v5M92.5 187v5M93.5 188v6M94.5 188v7M95.5 187v5M96.5 186v4M97.5 188v4M98.5 188v6M99.5 188v7M100.5 187v5M101.5 185v5M102.5 187v5M103.5 188v6M104.5 188v7M105.5 187v5M106.5 186v4M107.5 188v4M108.5 188v6M109.5 188v7M110.5 187v5M111.5 185v5M112.5 187v5M113.5 188v6M114.5 188v7M115.5 187v5M116.5 185v5M117.5 187v5M118.5 188v5M119.5 188v6M120.5 187v5M121.5 185v5M122.5 187v5M123.5 188v6M124.5 188v7M125.5 187v5M126.5 186v4M127.5 188v4M128.5 188v6M129.5 188v7M130.5 187v5M131.5 185v5M132.5 187v5M133.5 188v5M134.5 188v6M135.5 187v5M136.5 185v5M137.5 187v5M138.5 188v6M139.5 188v7M140.5 187v5M141.5 185v5M142.5 187v5M143.5 188v5M144.5 188v6M145.5 187v5M146.5 185v5M147.5 187v5M148.5 188v6M149.5 188v7M150.5 187v5M151.5 185v5M152.5 187v5M153.5 188v6M154.5 188v7M155.5 187v5M156.5 185v5M157.5 187v5M158.5 188v6M159.5 188v7M160.5 187v5M161.5 185v5M162.5 187v5M163.5 188v5M164.5 188v5M165.5 188v6M166.5 187v5M167.5 186v4M168.5 188v4M169.5 188v6M170.5 188v7M171.5 187v5M172.5 185v5M173.5 187v5M174.5 188v6M175.5 188v7M176.5 187v5M177.5 185v5M178.5 187v5M179.5 188v6M180.5 188v7M181.5 187v5M182.5 186v4M183.5 188v4M184.5 188v6M185.5 188v7M186.5 187v5M187.5 185v5M188.5 187v5M189.5 188v6M190.5 188v7M191.5 187v5M192.5 185v5M193.5 187v5M194.5 188v6M195.5 188v7M196.5 187v5M197.5 185v5M198.5 187v5M199.5 188v6M200.5 188v7M201.5 187v5M202.5 186v4M203.5 188v4M204.5 188v5M205.5 188v6M206.5 187v5M207.5 185v5M208.5 187v5M209.5 188v6M210.5 188v7M211.5 187v5M212.5 185v5M213.5 187v5M214.5 188v5M215.5 188v6M216.5 187v5M217.5 185v5M218.5 187v5M219.5 188v6M220.5 188v7M221.5 187v5M222.5 186v4M223.5 188v4M224.5 188v6M225.5 188v7M226.5 187v5M227.5 185v5M228.5 187v5M229.5 188v5M230.5 188v6M231.5 187v5M232.5 186v4M233.5 188v4M234.5 188v6M235.5 188v7M236.5 187v5M237.5 187v5M238.5 185v5M239.5 187v5M240.5 188v6M241.5 188v7M242.5 187v5M243.5 185v5M244.5 187v5M245.5 188v6M246.5 188v7M247.5 187v5M248.5 185v5M249.5 187v5M250.5 188v5M251.5 188v6M252.5 187v5M253.5 185v5M254.5 187v5M255.5 188v6M256.5 188v7M257.5 187v5M258.5 185v5M259.5 187v5M260.5 188v5M261.5 188v6M262.5 187v5M263.5 185v5M264.5 187v5M265.5 188v6M266.5 188v7M267.5 187v5M268.5 186v4M269.5 188v4M270.5 188v6M271.5 188v7M272.5 187v5M273.5 185v5M274.5 187v5M275.5 188v6M276.5 188v7M277.5 187v5M278.5 185v5M279.5 187v5M280.5 188v5M281.5 188v6M282.5 187v5M283.5 185v5M284.5 187v5M285.5 188v6M286.5 188v7M287.5 187v5M288.5 185v5M289.5 187v5M290.5 188v6M291.5 188v7M292.5 187v5M293.5 186v4M294.5 188v4M295.5 188v6M296.5 188v7M297.5 187v5M298.5 185v5M299.5 187v5M300.5 188v6M301.5 188v7M302.5 187v5M303.5 185v5M304.5 187v5M305.5 188v5M306.5 188v6M307.5 187v5M308.5 185v5M309.5 185v5M310.5 187v5M311.5 188v5M312.5 188v6M313.5 187v5M314.5 185v5M315.5 187v5M316.5 188v5M317.5 188v6M318.5 187v5M319.5 186v4M320.5 188v4M321.5 188v6M322.5 188v7M323.5 187v5M324.5 185v5M325.5 187v5M326.5 188v6M327.5 188v7M328.5 187v5M329.5 186v4M330.5 188v4M331.5 188v5M332.5 188v6M333.5 187v5M334.5 186v4M335.5 188v4M336.5 188v6M337.5 188v7M338.5 187v5M339.5 185v5M340.5 187v5M341.5 188v6M342.5 188v7M343.5 187v5M344.5 185v5M345.5 187v5M346.5 188v6M347.5 188v7M348.5 187v5M349.5 185v5M350.5 187v5M351.5 188v6M352.5 188v7M353.5 187v5M354.5 185v5M355.5 187v5M356.5 188v5M357.5 188v6M358.5 187v5M359.5 185v5M360.5 187v5M361.5 188v5M362.5 187v5M363.5 189v4M364.5 191v4M365.5 191v3M366.5 190v3M367.5 190v6M368.5 193v6M369.5 197v3M370.5 197v3M371.5 196v3M372.5 196v5M373.5 199v5M374.5 202v4M375.5 202v4M376.5 201v4M377.5 201v6M378.5 204v5M379.5 207v3M380.5 207v3M381.5 206v3M382.5 206v5M383.5 209v4M384.5 211v4M385.5 211v3M386.5 210v3M387.5 210v5M388.5 213v5M389.5 216v4M390.5 216v3M391.5 215v3M392.5 215v5M393.5 217v6M394.5 220v4M395.5 220v4M396.5 219v3M397.5 219v5M398.5 222v5M399.5 225v4M400.5 225v3M401.5 223v4M402.5 223v6M403.5 227v5M404.5 229v4M405.5 229v3M406.5 228v3M407.5 228v5M408.5 230v5M409.5 233v4M410.5 232v4M411.5 231v4M412.5 231v5M413.5 234v5M414.5 236v4M415.5 236v3M416.5 235v3M417.5 235v5M418.5 238v5M419.5 240v4M420.5 240v4M421.5 240v3M422.5 240v5M423.5 242v5M424.5 245v3M425.5 245v3M426.5 244v3M427.5 244v5M428.5 247v4M429.5 249v4M430.5 249v3M431.5 248v3M432.5 248v5M433.5 251v5M434.5 254v4M435.5 254v3M436.5 253v3M437.5 253v5M438.5 255v6M439.5 258v4M440.5 258v3M441.5 258v3M442.5 258v4M443.5 260v5M444.5 263v3M445.5 263v3M446.5 261v4M447.5 261v6M448.5 265v5M449.5 267v5M450.5 268v3M451.5 267v3M452.5 267v5M453.5 270v5M454.5 273v3M455.5 272v3M456.5 272v3M457.5 272v5M458.5 272v6M459.5 273v5M460.5 276v5M461.5 276v5M462.5 272v4M463.5 274v4M464.5 274v6M465.5 274v7M466.5 273v5M467.5 272v4M468.5 274v4M469.5 274v6M470.5 274v7M471.5 273v5M472.5 272v4M473.5 274v4M474.5 274v6M475.5 274v7M476.5 273v5M477.5 272v4M478.5 274v4M479.5 274v5M480.5 274v6M481.5 273v5M482.5 273v3M483.5 274v4M484.5 274v6M485.5 274v7M486.5 273v5M487.5 273v3M488.5 274v4M489.5 274v5M490.5 274v6M491.5 273v5M492.5 272v4M493.5 274v4M494.5 274v6M495.5 274v7M496.5 273v5M497.5 273v3M498.5 274v4M499.5 274v5M500.5 274v6M501.5 273v5M502.5 272v4M503.5 274v4M504.5 274v6M505.5 274v7M506.5 273v5M507.5 272v4M508.5 274v4M509.5 274v6M510.5 274v7M511.5 273v5M512.5 273v3M513.5 274v4M514.5 274v6M515.5 274v7M516.5 273v5M517.5 273v3M518.5 274v4M519.5 274v6M520.5 274v7M521.5 273v5M522.5 272v4M523.5 274v4M524.5 274v6M525.5 274v7M526.5 274v7M527.5 273v5M528.5 273v3M529.5 274v4M530.5 274v6M531.5 274v7M532.5 273v5M533.5 272v4M534.5 274v4M535.5 274v5M536.5 274v6M537.5 273v5M538.5 273v3M539.5 274v4M540.5 274v6M541.5 274v7M542.5 273v5M543.5 273v3M544.5 274v4M545.5 274v5M546.5 274v6M547.5 273v5M548.5 272v4M549.5 274v4M550.5 274v5M551.5 274v6M552.5 273v5M553.5 272v4M554.5 274v4M555.5 274v6M556.5 274v7M557.5 273v5M558.5 272v4M559.5 274v4M560.5 274v6M561.5 274v7M562.5 273v5M563.5 272v4M564.5 274v4M565.5 274v6M566.5 274v7M567.5 273v5M568.5 272v4M569.5 274v4M570.5 274v6M571.5 274v7M572.5 273v5M573.5 272v4M574.5 274v4M575.5 274v5M576.5 274v6M577.5 273v5M578.5 272v4M579.5 274v4M580.5 274v5M581.5 274v6M582.5 273v5M583.5 273v3M584.5 274v4M585.5 274v6M586.5 274v7M587.5 273v5M588.5 272v4M589.5 274v4M590.5 274v5M591.5 274v6M592.5 273v5M593.5 273v3M594.5 274v4M595.5 274v5M596.5 274v6M597.5 273v5M598.5 272v4M599.5 272v4M600.5 274v4M601.5 274v6M602.5 274v7M603.5 273v5M604.5 272v4M605.5 274v4M606.5 274v5M607.5 274v6M608.5 273v5M609.5 273v3M610.5 274v4M611.5 274v6M612.5 274v7M613.5 273v5M614.5 272v4M615.5 274v4M616.5 274v6M617.5 274v7M618.5 273v5M619.5 272v4M620.5 274v4M621.5 274v6M622.5 274v7M623.5 273v5M624.5 272v4M625.5 274v4M626.5 274v6M627.5 274v7M628.5 273v5M629.5 272v4M630.5 274v4M631.5 274v6M632.5 274v7M633.5 273v5M634.5 272v4M635.5 274v4M636.5 274v6M637.5 274v7M638.5 273v5M639.5 272v4M640.5 274v4M641.5 274v6M642.5 274v7M643.5 273v5M644.5 272v4M645.5 274v4M646.5 274v5M647.5 274v6M648.5 273v5M649.5 273v3M650.5 274v4M651.5 274v6M652.5 274v7M653.5 273v5M654.5 272v4M655.5 274v4M656.5 274v6M657.5 274v7M658.5 273v5M659.5 273v3M660.5 274v4M661.5 274v6M662.5 274v7M663.5 273v5M664.5 272v4M665.5 274v4M666.5 274v6M667.5 274v7M668.5 273v5M669.5 273v3M670.5 274v4M671.5 274v4M672.5 274v5M673.5 274v6M674.5 273v5M675.5 272v4M676.5 274v4M677.5 274v5M678.5 274v6M679.5 273v5M680.5 272v4M681.5 274v4M682.5 274v6M683.5 274v7M684.5 273v5M685.5 272v4M686.5 274v4M687.5 274v6M688.5 274v7M689.5 273v5M690.5 272v4M691.5 274v4M692.5 274v5M693.5 274v6M694.5 273v5M695.5 273v3M696.5 274v4M697.5 274v6M698.5 274v7M699.5 273v5M700.5 272v4M701.5 274v4M702.5 274v5M703.5 274v6M704.5 273v5M705.5 272v4M706.5 274v4M707.5 274v5M708.5 274v6M709.5 273v5M710.5 273v3M711.5 274v4M712.5 274v6M713.5 274v7M714.5 273v5M715.5 272v4M716.5 274v4M717.5 274v5M718.5 274v6M719.5 273v5M720.5 272v4M721.5 274v4M722.5 274v5M723.5 274v6M724.5 273v5M725.5 272v4M726.5 274v4M727.5 274v6M728.5 274v7M729.5 273v5M730.5 272v4M731.5 274v4M732.5 274v5M733.5 274v6M734.5 273v5M735.5 272v4M736.5 274v4M737.5 274v6M738.5 274v7M739.5 273v5M740.5 273v3M741.5 274v4M742.5 274v5M743.5 274v5M744.5 274v6M745.5 273v5M746.5 273v3M747.5 274v4M748.5 274v6M749.5 274v7M750.5 273v5M751.5 272v4M752.5 274v4M753.5 274v6M754.5 274v7M755.5 273v5M756.5 272v4M757.5 274v4M758.5 274v5M759.5 274v6M760.5 273v5M761.5 272v4M762.5 274v4M763.5 274v5M764.5 274v6M765.5 273v5M766.5 272v4M767.5 274v4M768.5 274v6M769.5 274v7M770.5 273v5M771.5 272v4M772.5 274v4M773.5 274v6M774.5 274v7M775.5 273v5M776.5 272v4M777.5 274v4M778.5 274v5M779.5 274v6M780.5 273v5M781.5 272v4M782.5 274v4M783.5 274v5M784.5 274v6M785.5 273v5M786.5 273v3M787.5 274v4M788.5 274v5M789.5 274v6M790.5 273v5M791.5 273v3M792.5 274v4M793.5 274v5M794.5 274v6M795.5 273v5M796.5 272v4M797.5 274v4M798.5 274v6M799.5 274v7M800.5 273v5M801.5 272v4M802.5 274v4M803.5 274v5M804.5 274v6M805.5 273v5M806.5 272v4M807.5 274v4M808.5 274v6M809.5 274v7M810.5 273v5M811.5 273v3M812.5 274v4M813.5 274v6M814.5 274v7M815.5 273v5M816.5 273v5M817.5 272v4M818.5 274v4M819.5 274v6M820.5 274v7M821.5 273v5M822.5 272v4M823.5 274v4M824.5 274v6M825.5 274v7M826.5 273v5M827.5 272v4M828.5 274v4M829.5 274v6M830.5 274v7M831.5 273v5M832.5 273v3M833.5 274v4M834.5 274v6M835.5 274v7M836.5 273v5M837.5 273v3M838.5 274v4M839.5 274v6M840.5 274v7M841.5 273v5M842.5 272v4M843.5 274v4M844.5 274v6M845.5 274v7M846.5 273v5M847.5 272v4M848.5 274v4M849.5 274v6M850.5 274v7M851.5 273v5M852.5 273v3M853.5 274v4M854.5 274v6M855.5 274v7M856.5 273v5M857.5 272v4M858.5 274v4M859.5 274v6M860.5 274v7M861.5 273v5M862.5 272v4M863.5 274v4M864.5 274v5M865.5 274v6M866.5 273v5M867.5 273v3M868.5 274v4M869.5 274v5M870.5 274v6M871.5 273v5M872.5 273v3M873.5 274v4M874.5 274v5M875.5 274v6M876.5 273v5M877.5 273v3M878.5 274v4M879.5 274v5M880.5 274v6M881.5 273v5M882.5 272v4M883.5 274v4M884.5 274v6M885.5 274v7M886.5 273v5M887.5 272v4M888.5 272v4M889.5 274v4M890.5 274v6M891.5 274v7M892.5 273v5M893.5 272v4M894.5 274v4M895.5 274v6M896.5 274v7M897.5 273v5M898.5 272v4M899.5 274v4M900.5 274v6M901.5 274v7M902.5 273v5M903.5 273v3M904.5 274v4M905.5 274v6M906.5 274v7M907.5 273v5M908.5 273v3M909.5 274v4M910.5 274v6M911.5 274v7M912.5 273v5M913.5 273v3M914.5 274v4M915.5 274v6M916.5 274v7M917.5 273v5M918.5 272v4M919.5 274v4M920.5 274v6M921.5 274v7M922.5 273v5M923.5 272v4M924.5 274v4M925.5 274v6M926.5 274v7M927.5 273v5M928.5 272v4M929.5 274v4M930.5 274v5M931.5 274v6M932.5 273v5M933.5 272v4M934.5 274v4M935.5 274v6M936.5 274v7M937.5 273v5M938.5 272v4M939.5 274v4M940.5 274v5M941.5 274v6M942.5 273v5M943.5 273v3M944.5 274v4M945.5 274v6M946.5 274v7M947.5 273v5M948.5 272v4M949.5 274v4M950.5 274v6M951.5 274v7M952.5 273v5M953.5 272v4M954.5 274v4M955.5 274v6M956.5 274v7M957.5 273v5M958.5 273v3M959.5 274v4M960.5 274v6M961.5 274v6M962.5 274v7M963.5 273v5M964.5 272v4M965.5 274v4M966.5 274v6M967.5 274v7M968.5 273v5M969.5 272v4M970.5 274v4M971.5 274v6M972.5 274v7M973.5 273v5M974.5 273v3M975.5 274v4M976.5 274v6M977.5 274v7M978.5 273v5M979.5 272v4M980.5 274v4M981.5 274v6M982.5 274v7M983.5 273v5M984.5 273v3M985.5 274v4M986.5 274v6M987.5 274v7M988.5 273v5M989.5 272v4M990.5 274v4M991.5 274v5M992.5 274v6M993.5 273v5M994.5 272v4M995.5 274v4M996.5 274v6M997.5 274v7M998.5 273v5M999.5 272v4M1000.5 274v4M1001.5 274v6M1002.5 274v7M1003.5 273v5M1004.5 272v4M1005.5 274v4M1006.5 274v6M1007.5 274v7M1008.5 273v5M1009.5 272v4M1010.5 274v4M1011.5 274v5M1012.5 274v6M1013.5 273v5M1014.5 273v3M1015.5 274v4" stroke="#f0004c" stroke-width="1" fill="none"/></g>
<g id="grid" class="ce">
<path d="M115 47.5h2M115 58.5h2M115 70.5h2M115 81.5h2M115 103.5h2M115 114.5h2M115 126.5h2M115 137.5h2M115 159.5h2M115 170.5h2M115 182.5h2M115 193.5h2M115 215.5h2M115 226.5h2M115 238.5h2M115 249.5h2M115 271.5h2M115 282.5h2M115 294.5h2M115 305.5h2M115 327.5h2M115 338.5h2M115 350.5h2M115 361.5h2M115 383.5h2M115 394.5h2M115 406.5h2M115 417.5h2M115 439.5h2M115 450.5h2M115 462.5h2M115 473.5h2M115 495.5h2M115 506.5h2M115 518.5h2M115 529.5h2M115 551.5h2M115 562.5h2M115 574.5h2M115 585.5h2M215 47.5h2M215 58.5h2M215 70.5h2M215 81.5h2M215 103.5h2M215 114.5h2M215 126.5h2M215 137.5h2M215 159.5h2M215 170.5h2M215 182.5h2M215 193.5h2M215 215.5h2M215 226.5h2M215 238.5h2M215 249.5h2M215 271.5h2M215 282.5h2M215 294.5h2M215 305.5h2M215 327.5h2M215 338.5h2M215 350.5h2M215 361.5h2M215 383.5h2M215 394.5h2M215 406.5h2M215 417.5h2M215 439.5h2M215 450.5h2M215 462.5h2M215 473.5h2M215 495.5h2M215 506.5h2M215 518.5h2M215 529.5h2M215 551.5h2M215 562.5h2M215 574.5h2M215 585.5h2M315 47.5h2M315 58.5h2M315 70.5h2M315 81.5h2M315 103.5h2M315 114.5h2M315 126.5h2M315 137.5h2M315 159.5h2M315 170.5h2M315 182.5h2M315 193.5h2M315 215.5h2M315 226.5h2M315 238.5h2M315 249.5h2M315 271.5h2M315 282.5h2M315 294.5h2M315 305.5h2M315 327.5h2M315 338.5h2M315 350.5h2M315 361.5h2M315 383.5h2M315 394.5h2M315 406.5h2M315 417.5h2M315 439.5h2M315 450.5h2M315 462.5h2M315 473.5h2M315 495.5h2M315 506.5h2M315 518.5h2M315 529.5h2M315 551.5h2M315 562.5h2M315 574.5h2M315 585.5h2M415 47.5h2M415 58.5h2M415 70.5h2M415 81.5h2M415 103.5h2M415 114.5h2M415 126.5h2M415 137.5h2M415 159.5h2M415 170.5h2M415 182.5h2M415 193.5h2M415 215.5h2M415 226.5h2M415 238.5h2M415 249.5h2M415 271.5h2M415 282.5h2M415 294.5h2M415 305.5h2M415 327.5h2M415 338.5h2M415 350.5h2M415 361.5h2M415 383.5h2M415 394.5h2M415 406.5h2M415 417.5h2M415 439.5h2M415 450.5h2M415 462.5h2M415 473.5h2M415 495.5h2M415 506.5h2M415 518.5h2M415 529.5h2M415 551.5h2M415 562.5h2M415 574.5h2M415 585.5h2M615 47.5h2M615 58.5h2M615 70.5h2M615 81.5h2M615 103.5h2M615 114.5h2M615 126.5h2M615 137.5h2M615 159.5h2M615 170.5h2M615 182.5h2M615 193.5h2M615 215.5h2M615 226.5h2M615 238.5h2M615 249.5h2M615 271.5h2M615 282.5h2M615 294.5h2M615 305.5h2M615 327.5h2M615 338.5h2M615 350.5h2M615 361.5h2M615 383.5h2M615 394.5h2M615 406.5h2M615 417.5h2M615 439.5h2M615 450.5h2M615 462.5h2M615 473.5h2M615 495.5h2M615 506.5h2M615 518.5h2M615 529.5h2M615 551.5h2M615 562.5h2M615 574.5h2M615 585.5h2M715 47.5h2M715 58.5h2M715 70.5h2M715 81.5h2M715 103.5h2M715 114.5h2M715 126.5h2M715 137.5h2M715 159.5h2M715 170.5h2M715 182.5h2M715 193.5h2M715 215.5h2M715 226.5h2M715 238.5h2M715 249.5h2M715 271.5h2M715 282.5h2M715 294.5h2M715 305.5h2M715 327.5h2M715 338.5h2M715 350.5h2M715 361.5h2M715 383.5h2M715 394.5h2M715 406.5h2M715 417.5h2M715 439.5h2M715 450.5h2M715 462.5h2M715 473.5h2M715 495.5h2M715 506.5h2M715 518.5h2M715 529.5h2M715 551.5h2M715 562.5h2M715 574.5h2M715 585.5h2M815 47.5h2M815 58.5h2M815 70.5h2M815 81.5h2M815 103.5h2M815 114.5h2M815 126.5h2M815 137.5h2M815 159.5h2M815 170.5h2M815 182.5h2M815 193.5h2M815 215.5h2M815 226.5h2M815 238.5h2M815 249.5h2M815 271.5h2M815 282.5h2M815 294.5h2M815 305.5h2M815 327.5h2M815 338.5h2M815 350.5h2M815 361.5h2M815 383.5h2M815 394.5h2M815 406.5h2M815 417.5h2M815 439.5h2M815 450.5h2M815 462.5h2M815 473.5h2M815 495.5h2M815 506.5h2M815 518.5h2M815 529.5h2M815 551.5h2M815 562.5h2M815 574.5h2M815 585.5h2M915 47.5h2M915 58.5h2M915 70.5h2M915 81.5h2M915 103.5h2M915 114.5h2M915 126.5h2M915 137.5h2M915 159.5h2M915 170.5h2M915 182.5h2M915 193.5h2M915 215.5h2M915 226.5h2M915 238.5h2M915 249.5h2M915 271.5h2M915 282.5h2M915 294.5h2M915 305.5h2M915 327.5h2M915 338.5h2M915 350.5h2M915 361.5h2M915 383.5h2M915 394.5h2M915 406.5h2M915 417.5h2M915 439.5h2M915 450.5h2M915 462.5h2M915 473.5h2M915 495.5h2M915 506.5h2M915 518.5h2M915 529.5h2M915 551.5h2M915 562.5h2M915 574.5h2M915 585.5h2M35 92.5h2M55 92.5h2M75 92.5h2M95 92.5h2M135 92.5h2M155 92.5h2M175 92.5h2M195 92.5h2M235 92.5h2M255 92.5h2M275 92.5h2M295 92.5h2M335 92.5h2M355 92.5h2M375 92.5h2M395 92.5h2M435 92.5h2M455 92.5h2M475 92.5h2M495 92.5h2M535 92.5h2M555 92.5h2M575 92.5h2M595 92.5h2M635 92.5h2M655 92.5h2M675 92.5h2M695 92.5h2M735 92.5h2M755 92.5h2M775 92.5h2M795 92.5h2M835 92.5h2M855 92.5h2M875 92.5h2M895 92.5h2M935 92.5h2M955 92.5h2M975 92.5h2M995 92.5h2M35 148.5h2M55 148.5h2M75 148.5h2M95 148.5h2M135 148.5h2M155 148.5h2M175 148.5h2M195 148.5h2M235 148.5h2M255 148.5h2M275 148.5h2M295 148.5h2M335 148.5h2M355 148.5h2M375 148.5h2M395 148.5h2M435 148.5h2M455 148.5h2M475 148.5h2M495 148.5h2M535 148.5h2M555 148.5h2M575 148.5h2M595 148.5h2M635 148.5h2M655 148.5h2M675 148.5h2M695 148.5h2M735 148.5h2M755 148.5h2M775 148.5h2M795 148.5h2M835 148.5h2M855 148.5h2M875 148.5h2M895 148.5h2M935 148.5h2M955 148.5h2M975 148.5h2M995 148.5h2M35 204.5h2M55 204.5h2M75 204.5h2M95 204.5h2M135 204.5h2M155 204.5h2M175 204.5h2M195 204.5h2M235 204.5h2M255 204.5h2M275 204.5h2M295 204.5h2M335 204.5h2M355 204.5h2M375 204.5h2M395 204.5h2M435 204.5h2M455 204.5h2M475 204.5h2M495 204.5h2M535 204.5h2M555 204.5h2M575 204.5h2M595 204.5h2M635 204.5h2M655 204.5h2M675 204.5h2M695 204.5h2M735 204.5h2M755 204.5h2M775 204.5h2M795 204.5h2M835 204.5h2M855 204.5h2M875 204.5h2M895 204.5h2M935 204.5h2M955 204.5h2M975 204.5h2M995 204.5h2M35 260.5h2M55 260.5h2M75 260.5h2M95 260.5h2M135 260.5h2M155 260.5h2M175 260.5h2M195 260.5h2M235 260.5h2M255 260.5h2M275 260.5h2M295 260.5h2M335 260.5h2M355 260.5h2M375 260.5h2M395 260.5h2M435 260.5h2M455 260.5h2M475 260.5h2M495 260.5h2M535 260.5h2M555 260.5h2M575 260.5h2M595 260.5h2M635 260.5h2M655 260.5h2M675 260.5h2M695 260.5h2M735 260.5h2M755 260.5h2M775 260.5h2M795 260.5h2M835 260.5h2M855 260.5h2M875 260.5h2M895 260.5h2M935 260.5h2M955 260.5h2M975 260.5h2M995 260.5h2M35 372.5h2M55 372.5h2M75 372.5h2M95 372.5h2M135 372.5h2M155 372.5h2M175 372.5h2M195 372.5h2M235 372.5h2M255 372.5h2M275 372.5h2M295 372.5h2M335 372.5h2M355 372.5h2M375 372.5h2M395 372.5h2M435 372.5h2M455 372.5h2M475 372.5h2M495 372.5h2M535 372.5h2M555 372.5h2M575 372.5h2M595 372.5h2M635 372.5h2M655 372.5h2M675 372.5h2M695 372.5h2M735 372.5h2M755 372.5h2M775 372.5h2M795 372.5h2M835 372.5h2M855 372.5h2M875 372.5h2M895 372.5h2M935 372.5h2M955 372.5h2M975 372.5h2M995 372.5h2M35 428.5h2M55 428.5h2M75 428.5h2M95 428.5h2M135 428.5h2M155 428.5h2M175 428.5h2M195 428.5h2M235 428.5h2M255 428.5h2M275 428.5h2M295 428.5h2M335 428.5h2M355 428.5h2M375 428.5h2M395 428.5h2M435 428.5h2M455 428.5h2M475 428.5h2M495 428.5h2M535 428.5h2M555 428.5h2M575 428.5h2M595 428.5h2M635 428.5h2M655 428.5h2M675 428.5h2M695 428.5h2M735 428.5h2M755 428.5h2M775 428.5h2M795 428.5h2M835 428.5h2M855 428.5h2M875 428.5h2M895 428.5h2M935 428.5h2M955 428.5h2M975 428.5h2M995 428.5h2M35 484.5h2M55 484.5h2M75 484.5h2M95 484.5h2M135 484.5h2M155 484.5h2M175 484.5h2M195 484.5h2M235 484.5h2M255 484.5h2M275 484.5h2M295 484.5h2M335 484.5h2M355 484.5h2M375 484.5h2M395 484.5h2M435 484.5h2M455 484.5h2M475 484.5h2M495 484.5h2M535 484.5h2M555 484.5h2M575 484.5h2M595 484.5h2M635 484.5h2M655 484.5h2M675 484.5h2M695 484.5h2M735 484.5h2M755 484.5h2M775 484.5h2M795 484.5h2M835 484.5h2M855 484.5h2M875 484.5h2M895 484.5h2M935 484.5h2M955 484.5h2M975 484.5h2M995 484.5h2M35 540.5h2M55 540.5h2M75 540.5h2M95 540.5h2M135 540.5h2M155 540.5h2M175 540.5h2M195 540.5h2M235 540.5h2M255 540.5h2M275 540.5h2M295 540.5h2M335 540.5h2M355 540.5h2M375 540.5h2M395 540.5h2M435 540.5h2M455 540.5h2M475 540.5h2M495 540.5h2M535 540.5h2M555 540.5h2M575 540.5h2M595 540.5h2M635 540.5h2M655 540.5h2M675 540.5h2M695 540.5h2M735 540.5h2M755 540.5h2M775 540.5h2M795 540.5h2M835 540.5h2M855 540.5h2M875 540.5h2M895 540.5h2M935 540.5h2M955 540.5h2M975 540.5h2M995 540.5h2" stroke="#cfcabb" stroke-width="1"/>
<path d="M115 92.5h2M115 148.5h2M115 204.5h2M115 260.5h2M115 316.5h2M115 372.5h2M115 428.5h2M115 484.5h2M115 540.5h2M215 92.5h2M215 148.5h2M215 204.5h2M215 260.5h2M215 316.5h2M215 372.5h2M215 428.5h2M215 484.5h2M215 540.5h2M315 92.5h2M315 148.5h2M315 204.5h2M315 260.5h2M315 316.5h2M315 372.5h2M315 428.5h2M315 484.5h2M315 540.5h2M415 92.5h2M415 148.5h2M415 204.5h2M415 260.5h2M415 316.5h2M415 372.5h2M415 428.5h2M415 484.5h2M415 540.5h2M615 92.5h2M615 148.5h2M615 204.5h2M615 260.5h2M615 316.5h2M615 372.5h2M615 428.5h2M615 484.5h2M615 540.5h2M715 92.5h2M715 148.5h2M715 204.5h2M715 260.5h2M715 316.5h2M715 372.5h2M715 428.5h2M715 484.5h2M715 540.5h2M815 92.5h2M815 148.5h2M815 204.5h2M815 260.5h2M815 316.5h2M815 372.5h2M815 428.5h2M815 484.5h2M815 540.5h2M915 92.5h2M915 148.5h2M915 204.5h2M915 260.5h2M915 316.5h2M915 372.5h2M915 428.5h2M915 484.5h2M915 540.5h2" stroke="#948a74" stroke-width="1"/>
<rect x="515" y="37" width="2" height="558" fill="#c4bcaa"/>
<rect x="30" y="315" width="985" height="2" fill="#c4bcaa"/>
<path d="M513 47.5h6M513 58.5h6M513 69.5h6M513 80.5h6M513 103.5h6M513 114.5h6M513 125.5h6M513 136.5h6M513 159.5h6M513 170.5h6M513 181.5h6M513 192.5h6M513 215.5h6M513 226.5h6M513 237.5h6M513 248.5h6M513 271.5h6M513 282.5h6M513 293.5h6M513 304.5h6M513 327.5h6M513 338.5h6M513 349.5h6M513 360.5h6M513 383.5h6M513 394.5h6M513 405.5h6M513 416.5h6M513 439.5h6M513 450.5h6M513 461.5h6M513 472.5h6M513 495.5h6M513 506.5h6M513 517.5h6M513 528.5h6M513 551.5h6M513 562.5h6M513 573.5h6M513 584.5h6" stroke="#8e846c" stroke-width="1"/>
<path d="M511 92.5h10M511 148.5h10M511 204.5h10M511 260.5h10M511 372.5h10M511 428.5h10M511 484.5h10M511 540.5h10" stroke="#a39a84" stroke-width="1"/>
<path d="M36 313v6M56 313v6M76 313v6M96 313v6M136 313v6M156 313v6M176 313v6M196 313v6M236 313v6M256 313v6M276 313v6M296 313v6M336 313v6M356 313v6M376 313v6M396 313v6M436 313v6M456 313v6M476 313v6M496 313v6M536 313v6M556 313v6M576 313v6M596 313v6M636 313v6M656 313v6M676 313v6M696 313v6M736 313v6M756 313v6M776 313v6M796 313v6M836 313v6M856 313v6M876 313v6M896 313v6M936 313v6M956 313v6M976 313v6M996 313v6" stroke="#a69c86" stroke-width="2"/>
<path d="M116 311v10M216 311v10M316 311v10M416 311v10M616 311v10M716 311v10M816 311v10M916 311v10" stroke="#a69c86" stroke-width="2"/>
<rect x="513" y="315" width="6" height="2" fill="#9a9078"/>
<path d="M36 36v6M56 36v6M76 36v6M96 36v6M116 36v10M136 36v6M156 36v6M176 36v6M196 36v6M216 36v10M236 36v6M256 36v6M276 36v6M296 36v6M316 36v10M336 36v6M356 36v6M376 36v6M396 36v6M416 36v10M436 36v6M456 36v6M476 36v6M496 36v6M516 36v10M536 36v6M556 36v6M576 36v6M596 36v6M616 36v10M636 36v6M656 36v6M676 36v6M696 36v6M716 36v10M736 36v6M756 36v6M776 36v6M796 36v6M816 36v10M836 36v6M856 36v6M876 36v6M896 36v6M916 36v10M936 36v6M956 36v6M976 36v6M996 36v6" stroke="#b4ac98" stroke-width="2"/>
<path d="M16 47.5h6M16 58.5h6M16 69.5h6M16 80.5h6M16 103.5h6M16 114.5h6M16 125.5h6M16 136.5h6M16 159.5h6M16 170.5h6M16 181.5h6M16 192.5h6M16 215.5h6M16 226.5h6M16 237.5h6M16 248.5h6M16 271.5h6M16 282.5h6M16 293.5h6M16 304.5h6M16 327.5h6M16 338.5h6M16 349.5h6M16 360.5h6M16 383.5h6M16 394.5h6M16 405.5h6M16 416.5h6M16 439.5h6M16 450.5h6M16 461.5h6M16 472.5h6M16 495.5h6M16 506.5h6M16 517.5h6M16 528.5h6M16 551.5h6M16 562.5h6M16 573.5h6M16 584.5h6M1010 47.5h6M1010 58.5h6M1010 69.5h6M1010 80.5h6M1010 103.5h6M1010 114.5h6M1010 125.5h6M1010 136.5h6M1010 159.5h6M1010 170.5h6M1010 181.5h6M1010 192.5h6M1010 215.5h6M1010 226.5h6M1010 237.5h6M1010 248.5h6M1010 271.5h6M1010 282.5h6M1010 293.5h6M1010 304.5h6M1010 327.5h6M1010 338.5h6M1010 349.5h6M1010 360.5h6M1010 383.5h6M1010 394.5h6M1010 405.5h6M1010 416.5h6M1010 439.5h6M1010 450.5h6M1010 461.5h6M1010 472.5h6M1010 495.5h6M1010 506.5h6M1010 517.5h6M1010 528.5h6M1010 551.5h6M1010 562.5h6M1010 573.5h6M1010 584.5h6" stroke="#9c927c" stroke-width="1"/>
<path d="M16 92h10M16 148h10M16 204h10M16 260h10M16 316h10M16 372h10M16 428h10M16 484h10M16 540h10M1006 92h10M1006 148h10M1006 204h10M1006 260h10M1006 316h10M1006 372h10M1006 428h10M1006 484h10M1006 540h10" stroke="#cdc6b6" stroke-width="2"/>
<path d="M16 92h6M1010 92h6M16 148h6M1010 148h6M16 204h6M1010 204h6M16 260h6M1010 260h6M16 316h6M1010 316h6M16 372h6M1010 372h6M16 428h6M1010 428h6M16 484h6M1010 484h6M16 540h6M1010 540h6" stroke="#a0967e" stroke-width="2"/>
<rect x="20" y="593" width="995" height="2" fill="#000"/>
<path d="M36 590v5M56 590v5M76 590v5M96 590v5M116 585v10M136 590v5M156 590v5M176 590v5M196 590v5M216 585v10M236 590v5M256 590v5M276 590v5M296 590v5M316 585v10M336 590v5M356 590v5M376 590v5M396 590v5M416 585v10M436 590v5M456 590v5M476 590v5M496 590v5M516 585v10M536 590v5M556 590v5M576 590v5M596 590v5M616 585v10M636 590v5M656 590v5M676 590v5M696 590v5M716 585v10M736 590v5M756 590v5M776 590v5M796 590v5M816 585v10M836 590v5M856 590v5M876 590v5M896 590v5M916 585v10M936 590v5M956 590v5M976 590v5M996 590v5" stroke="#d0c8b8" stroke-width="2"/>
</g>
<g id="cursors" class="ce">
<rect x="16" y="188" width="1000" height="2" fill="#ff72a0"/>
<rect x="16" y="274" width="1000" height="2" fill="#ff72a0"/>
<path d="M20 275h2M25 275h2M30 275h2M35 275h2M40 275h2M45 275h2M50 275h2M55 275h2M60 275h2M65 275h2M70 275h2M75 275h2M80 275h2M85 275h2M90 275h2M95 275h2M100 275h2M105 275h2M110 275h2M115 275h2M120 275h2M125 275h2M130 275h2M135 275h2M140 275h2M145 275h2M150 275h2M155 275h2M160 275h2M165 275h2M170 275h2M175 275h2M180 275h2M185 275h2M190 275h2M195 275h2M200 275h2M205 275h2M210 275h2M215 275h2M220 275h2M225 275h2M230 275h2M235 275h2M240 275h2M245 275h2M250 275h2M255 275h2M260 275h2M265 275h2M270 275h2M275 275h2M280 275h2M285 275h2M290 275h2M295 275h2M300 275h2M305 275h2M310 275h2M315 275h2M320 275h2M325 275h2M330 275h2M335 275h2M340 275h2M345 275h2M350 275h2M355 275h2M360 275h2M365 275h2M370 275h2M375 275h2M380 275h2M385 275h2M390 275h2M395 275h2M400 275h2M405 275h2M410 275h2M415 275h2M420 275h2M425 275h2M430 275h2M435 275h2M440 275h2M445 275h2M450 275h2M455 275h2M460 275h2M465 275h2M470 275h2M475 275h2M480 275h2M485 275h2M490 275h2M495 275h2M500 275h2M505 275h2M510 275h2M515 275h2M520 275h2M525 275h2M530 275h2M535 275h2M540 275h2M545 275h2M550 275h2M555 275h2M560 275h2M565 275h2M570 275h2M575 275h2M580 275h2M585 275h2M590 275h2M595 275h2M600 275h2M605 275h2M610 275h2M615 275h2M620 275h2M625 275h2M630 275h2M635 275h2M640 275h2M645 275h2M650 275h2M655 275h2M660 275h2M665 275h2M670 275h2M675 275h2M680 275h2M685 275h2M690 275h2M695 275h2M700 275h2M705 275h2M710 275h2M715 275h2M720 275h2M725 275h2M730 275h2M735 275h2M740 275h2M745 275h2M750 275h2M755 275h2M760 275h2M765 275h2M770 275h2M775 275h2M780 275h2M785 275h2M790 275h2M795 275h2M800 275h2M805 275h2M810 275h2M815 275h2M820 275h2M825 275h2M830 275h2M835 275h2M840 275h2M845 275h2M850 275h2M855 275h2M860 275h2M865 275h2M870 275h2M875 275h2M880 275h2M885 275h2M890 275h2M895 275h2M900 275h2M905 275h2M910 275h2M915 275h2M920 275h2M925 275h2M930 275h2M935 275h2M940 275h2M945 275h2M950 275h2M955 275h2M960 275h2M965 275h2M970 275h2M975 275h2M980 275h2M985 275h2M990 275h2M995 275h2M1000 275h2M1005 275h2M1010 275h2" stroke="#6c2444" stroke-width="2"/>
</g>
<circle cx="116" cy="180" r="6" fill="#ffa200"/>
<text x="116" y="183.6" font-size="11" fill="#000" font-weight="bold" text-anchor="middle">a</text>
<circle cx="116" cy="266" r="6" fill="#ffa200"/>
<text x="116" y="269.6" font-size="11" fill="#000" font-weight="bold" text-anchor="middle">b</text>
<path d="M361.5 220.5H394.5L404 230.5L394.5 240.5H361.5Z" fill="#fff" fill-opacity="0.0" stroke="#ff9020" stroke-width="1"/>
<text x="364" y="234" font-size="10" fill="#ff8c1a" textLength="27.5" lengthAdjust="spacingAndGlyphs">50.0%</text>
<path d="M97.8 36.5H108.2L103 45.8Z" fill="#ff8000"/>
<path d="M995 452.6L1003.6 448V457.2Z" fill="#ff00ff"/>
<rect x="1003" y="451.8" width="16" height="1.5" fill="#ff00ff"/>
<circle cx="10" cy="205" r="9.8" fill="#aaa4aa"/>
<circle cx="10" cy="205" r="7.9" fill="#00ff00"/>
<rect x="17.5" y="203.5" width="6" height="3" fill="#00ff00"/>
<path d="M23 200L30 205L23 210Z" fill="#00ff00"/>
<text x="10" y="209.2" font-size="11.6" fill="#000" text-anchor="middle">4</text>
<circle cx="10" cy="316" r="9.8" fill="#ffa818"/>
<circle cx="10" cy="316" r="7.9" fill="#ff0050"/>
<rect x="17.5" y="315.0" width="6" height="2" fill="#ff0050"/>
<path d="M23 311L30 316L23 321Z" fill="#ff0050"/>
<text x="10" y="320.2" font-size="11.6" fill="#000" text-anchor="middle">1</text>
<path d="M23 583.4L30 588.4L23 593.4Z" fill="#ff00ff"/>
<rect x="17.5" y="587" width="6" height="2" fill="#ff00ff"/>
<circle cx="10" cy="589.8" r="9.8" fill="#a8a8a8"/>
<circle cx="10" cy="589.8" r="7.9" fill="#00ffff"/>
<rect x="17.5" y="588.3" width="6" height="3" fill="#00ffff"/>
<path d="M23 584.8L30 589.8L23 594.8Z" fill="#00ffff"/>
<text x="10" y="594.0" font-size="11.6" fill="#000" text-anchor="middle">2</text>
<text x="116.8" y="60" font-size="13.6" fill="#000" textLength="53.2" lengthAdjust="spacingAndGlyphs">TPS53915</text>
<text x="116.8" y="78" font-size="13.6" fill="#000" textLength="99.8" lengthAdjust="spacingAndGlyphs">Vin=12V,Vout=1.2V</text>
<text x="117.6" y="96" font-size="13.6" fill="#000" textLength="39.4" lengthAdjust="spacingAndGlyphs">Iout=3A</text>
<text x="55.8" y="102.6" font-size="12" fill="#00f000" textLength="36.2" lengthAdjust="spacingAndGlyphs">PGOOD</text>
<text x="64.6" y="168" font-size="12" fill="#ff0050" textLength="27" lengthAdjust="spacingAndGlyphs">VOUT</text>
<text x="100" y="387" font-size="12" fill="#00f0f0" textLength="20" lengthAdjust="spacingAndGlyphs">SDA</text>
<text x="135" y="388" font-size="12" fill="#ff00ff" textLength="18.3" lengthAdjust="spacingAndGlyphs">SCL</text>
<g id="panels">
<rect x="21.5" y="604.5" width="280" height="92" rx="6" fill="#fff" stroke="#111" stroke-width="1.2"/>
<rect x="29.3" y="610.6" width="33.4" height="16" rx="8.0" fill="url(#gRim)"/>
<rect x="31.3" y="612.6" width="29.4" height="11.2" rx="5.6" fill="url(#gC1)"/>
<text x="40.2" y="621.6" font-size="9.3" fill="#000" font-weight="bold" textLength="11.6" lengthAdjust="spacingAndGlyphs">C1</text>
<text x="67.6" y="621.2" font-size="12" fill="#111" font-weight="bold" textLength="39" lengthAdjust="spacingAndGlyphs">100mV</text>
<text x="213" y="621.2" font-size="12" fill="#111" font-weight="bold" textLength="25" lengthAdjust="spacingAndGlyphs">1M&#937;</text>
<text x="245.4" y="618.4000000000001" font-size="10" fill="#111" font-weight="bold" textLength="5.6" lengthAdjust="spacingAndGlyphs">B</text>
<text x="250.8" y="624.0" font-size="11" fill="#111" font-weight="bold" textLength="9.4" lengthAdjust="spacingAndGlyphs">W</text>
<text x="260.4" y="621.2" font-size="12" fill="#111" font-weight="bold" textLength="36.3" lengthAdjust="spacingAndGlyphs">:20.0M</text>
<rect x="29.3" y="631.4" width="33.4" height="16" rx="8.0" fill="url(#gRim)"/>
<rect x="31.3" y="633.4" width="29.4" height="11.2" rx="5.6" fill="url(#gC2)"/>
<text x="40.2" y="642.4" font-size="9.3" fill="#000" font-weight="bold" textLength="11.6" lengthAdjust="spacingAndGlyphs">C2</text>
<text x="67.2" y="642.0" font-size="12" fill="#111" font-weight="bold" textLength="45.8" lengthAdjust="spacingAndGlyphs">1.0V/div</text>
<text x="183" y="642.0" font-size="12" fill="#111" font-weight="bold" textLength="25" lengthAdjust="spacingAndGlyphs">1M&#937;</text>
<text x="215.4" y="639.2" font-size="10" fill="#111" font-weight="bold" textLength="5.6" lengthAdjust="spacingAndGlyphs">B</text>
<text x="220.8" y="644.8" font-size="11" fill="#111" font-weight="bold" textLength="9.4" lengthAdjust="spacingAndGlyphs">W</text>
<text x="230.4" y="642.0" font-size="12" fill="#111" font-weight="bold" textLength="36.3" lengthAdjust="spacingAndGlyphs">:20.0M</text>
<rect x="29.3" y="652.4" width="33.4" height="16" rx="8.0" fill="url(#gRim)"/>
<rect x="31.3" y="654.4" width="29.4" height="11.2" rx="5.6" fill="url(#gC3)"/>
<text x="40.2" y="663.4" font-size="9.3" fill="#000" font-weight="bold" textLength="11.6" lengthAdjust="spacingAndGlyphs">C3</text>
<text x="67.2" y="663.0" font-size="12" fill="#111" font-weight="bold" textLength="45.8" lengthAdjust="spacingAndGlyphs">1.0V/div</text>
<text x="183" y="663.0" font-size="12" fill="#111" font-weight="bold" textLength="25" lengthAdjust="spacingAndGlyphs">1M&#937;</text>
<text x="215.4" y="660.2" font-size="10" fill="#111" font-weight="bold" textLength="5.6" lengthAdjust="spacingAndGlyphs">B</text>
<text x="220.8" y="665.8" font-size="11" fill="#111" font-weight="bold" textLength="9.4" lengthAdjust="spacingAndGlyphs">W</text>
<text x="230.4" y="663.0" font-size="12" fill="#111" font-weight="bold" textLength="36.3" lengthAdjust="spacingAndGlyphs">:20.0M</text>
<rect x="29.3" y="673.4" width="33.4" height="16" rx="8.0" fill="url(#gRim)"/>
<rect x="31.3" y="675.4" width="29.4" height="11.2" rx="5.6" fill="url(#gC4)"/>
<text x="40.2" y="684.4" font-size="9.3" fill="#000" font-weight="bold" textLength="11.6" lengthAdjust="spacingAndGlyphs">C4</text>
<text x="67.2" y="684.0" font-size="12" fill="#111" font-weight="bold" textLength="46.2" lengthAdjust="spacingAndGlyphs">2.0V/div</text>
<text x="183" y="684.0" font-size="12" fill="#111" font-weight="bold" textLength="25" lengthAdjust="spacingAndGlyphs">1M&#937;</text>
<text x="215.4" y="681.2" font-size="10" fill="#111" font-weight="bold" textLength="5.6" lengthAdjust="spacingAndGlyphs">B</text>
<text x="220.8" y="686.8" font-size="11" fill="#111" font-weight="bold" textLength="9.4" lengthAdjust="spacingAndGlyphs">W</text>
<text x="230.4" y="684.0" font-size="12" fill="#111" font-weight="bold" textLength="36.3" lengthAdjust="spacingAndGlyphs">:20.0M</text>
<text x="117.5" y="621.2" font-size="12" fill="#111" font-weight="bold" textLength="64.4" lengthAdjust="spacingAndGlyphs">Offset:1.2V</text>
<rect x="306.5" y="604.5" width="135" height="69" rx="6" fill="#fff" stroke="#111" stroke-width="1.2"/>
<g class="ce">
<path d="M352.5 610.5H437.5V673.5H352.5ZM352.5 631.5H437.5M352.5 652.5H437.5" fill="#fff" stroke="#c4c4c4" stroke-width="1"/>
</g>
<rect x="313.3" y="611.2" width="37" height="17" rx="8.5" fill="url(#gRim)"/>
<rect x="315.3" y="613.2" width="33.0" height="12.2" rx="6.1" fill="url(#gC1)"/>
<text x="326.5" y="622.7" font-size="9.3" fill="#000" font-weight="bold" textLength="10.6" lengthAdjust="spacingAndGlyphs">V1</text>
<text x="354.6" y="624.6" font-size="12" fill="#111" font-weight="bold">1.427V</text>
<rect x="313.3" y="632.4" width="37" height="17" rx="8.5" fill="url(#gRim)"/>
<rect x="315.3" y="634.4" width="33.0" height="12.2" rx="6.1" fill="url(#gC1)"/>
<text x="326.40000000000003" y="643.9" font-size="9.3" fill="#000" font-weight="bold" textLength="10.8" lengthAdjust="spacingAndGlyphs">V2</text>
<text x="354.6" y="645.8" font-size="12" fill="#111" font-weight="bold">1.273V</text>
<rect x="313.3" y="653.4" width="37" height="17" rx="8.5" fill="url(#gRim)"/>
<rect x="315.3" y="655.4" width="33.0" height="12.2" rx="6.1" fill="url(#gC1)"/>
<text x="325.40000000000003" y="664.9" font-size="9.3" fill="#000" font-weight="bold" textLength="12.8" lengthAdjust="spacingAndGlyphs">&#916;V</text>
<text x="354.6" y="666.8" font-size="12" fill="#111" font-weight="bold">-153.56mV</text>
<rect x="591.5" y="604.5" width="185" height="23" rx="5" fill="#fff" stroke="#111" stroke-width="1.2"/>
<rect x="597.5" y="611.5" width="15" height="14" fill="#c8c8c8" stroke="#ff9a20" stroke-width="1"/>
<text x="599" y="622.4" font-size="12" fill="#111" font-weight="bold">A'</text>
<rect x="614.4" y="611.2" width="34" height="15" rx="7.5" fill="url(#gRim)"/>
<rect x="616.4" y="613.2" width="30.0" height="10.2" rx="5.1" fill="url(#gC3)"/>
<text x="625.6" y="621.7" font-size="9.3" fill="#000" font-weight="bold" textLength="11.6" lengthAdjust="spacingAndGlyphs">C3</text>
<path d="M651.2 623.6H655.2L660 612.2H664.2" fill="none" stroke="#111" stroke-width="1.6"/>
<text x="667.6" y="621.6" font-size="12" fill="#111" font-weight="bold">2.44V</text>
<rect x="781.5" y="604.5" width="230" height="92" rx="6" fill="#fff" stroke="#111" stroke-width="1.2"/>
<text x="789.3" y="621" font-size="12" fill="#111" font-weight="bold" textLength="58.7" lengthAdjust="spacingAndGlyphs">50.0&#181;s/div</text>
<text x="854" y="621" font-size="12" fill="#111" font-weight="bold" textLength="48.4" lengthAdjust="spacingAndGlyphs">200MS/s</text>
<text x="939.4" y="621" font-size="12" fill="#111" font-weight="bold" textLength="46" lengthAdjust="spacingAndGlyphs">5.0ns/pt</text>
<text x="789.3" y="642" font-size="12" fill="#111" font-weight="bold">Run</text>
<text x="879.6" y="642" font-size="12" fill="#111" font-weight="bold" textLength="36.8" lengthAdjust="spacingAndGlyphs">Hi Res</text>
<text x="789.3" y="663" font-size="12" fill="#111" font-weight="bold">1 acqs</text>
<text x="929.3" y="663" font-size="12" fill="#111" font-weight="bold" textLength="47.2" lengthAdjust="spacingAndGlyphs">RL:100k</text>
<text x="789.3" y="684" font-size="12" fill="#111" font-weight="bold">Auto</text>
<text x="831.2" y="684" font-size="12" fill="#111" font-weight="bold" textLength="97.8" lengthAdjust="spacingAndGlyphs">October 02, 2013</text>
<text x="956.4" y="684" font-size="12" fill="#111" font-weight="bold" textLength="48.4" lengthAdjust="spacingAndGlyphs">17:35:46</text>
<rect x="21.5" y="706.5" width="565" height="45" rx="6" fill="#fff" stroke="#111" stroke-width="1.2"/>
<rect x="29.3" y="733" width="33.4" height="15" rx="7.5" fill="url(#gRim)"/>
<rect x="31.3" y="735.0" width="29.4" height="10.2" rx="5.1" fill="url(#gC1)"/>
<text x="40.2" y="743.5" font-size="9.3" fill="#000" font-weight="bold" textLength="11.6" lengthAdjust="spacingAndGlyphs">C1</text>
<text x="70" y="745" font-size="12" fill="#111" font-weight="bold">Freq*</text>
<text x="145.7" y="725" font-size="12" fill="#111" font-weight="bold" textLength="32.3" lengthAdjust="spacingAndGlyphs">Value</text>
<text x="221.4" y="725" font-size="12" fill="#111" font-weight="bold" textLength="31.1" lengthAdjust="spacingAndGlyphs">Mean</text>
<text x="301.5" y="725" font-size="12" fill="#111" font-weight="bold" textLength="20.5" lengthAdjust="spacingAndGlyphs">Min</text>
<text x="370.6" y="725" font-size="12" fill="#111" font-weight="bold" textLength="22.9" lengthAdjust="spacingAndGlyphs">Max</text>
<text x="432.8" y="725" font-size="12" fill="#111" font-weight="bold" textLength="38.2" lengthAdjust="spacingAndGlyphs">St Dev</text>
<text x="499" y="725" font-size="12" fill="#111" font-weight="bold" textLength="36" lengthAdjust="spacingAndGlyphs">Count</text>
<text x="554.2" y="725" font-size="12" fill="#111" font-weight="bold" textLength="21.8" lengthAdjust="spacingAndGlyphs">Info</text>
<g class="ce">
<path d="M127.5 751V732.5H583.5V751M197.5 732.5V751M277.5 732.5V751M348.5 732.5V751M418.5 732.5V751M488.5 732.5V751M547.5 732.5V751" fill="none" stroke="#111" stroke-width="1"/>
</g>
<text x="130" y="745" font-size="11" fill="#111" font-weight="bold">-Hz</text>
<text x="199.6" y="745" font-size="11" fill="#111" font-weight="bold">?</text>
<text x="280" y="745" font-size="11" fill="#111" font-weight="bold">?</text>
<text x="350.4" y="745" font-size="11" fill="#111" font-weight="bold">?</text>
<text x="419.5" y="745" font-size="11" fill="#111" font-weight="bold">0.0</text>
<text x="489" y="745" font-size="11" fill="#111" font-weight="bold">0.0</text>
<rect x="558" y="733.6" width="16.4" height="16" fill="#000"/>
<circle cx="566.2" cy="741.6" r="6.9" fill="#fff"/>
<text x="565.4" y="745" font-size="12.5" fill="#000" font-weight="bold" text-anchor="middle" font-style="italic">x</text>
<path d="M567.3 737.3h2.8M561.2 745.7h3.6" stroke="#000" stroke-width="1"/>
</g>
</svg>
</body></html>
